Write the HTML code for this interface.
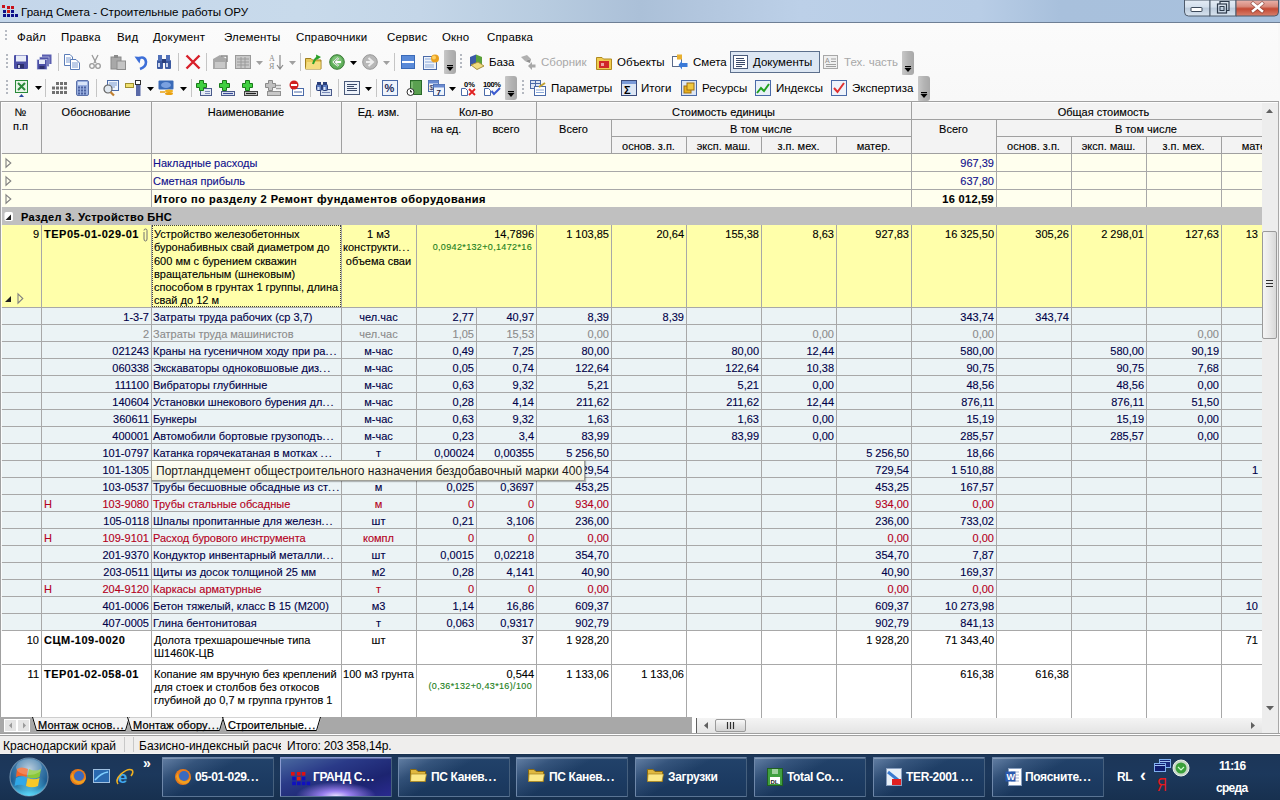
<!DOCTYPE html><html><head><meta charset="utf-8"><style>
html,body{margin:0;padding:0;width:1280px;height:800px;overflow:hidden;background:#fff;font-family:'Liberation Sans', sans-serif;}
.t{position:absolute;white-space:nowrap;font-family:'Liberation Sans', sans-serif;}
.tb .t{-webkit-text-stroke:0.12px currentColor;}
.r{position:absolute;}
svg{position:absolute;overflow:visible}
</style></head><body>
<div class="r" style="left:0px;top:0px;width:1280px;height:22px;background:linear-gradient(90deg,#c4d6ea 0px,#c8daeb 300px,#c4d6e8 420px,#b8cce0 540px,#abc0d8 640px,#b2c6de 700px,#bcd0e8 800px,#b8cde6 980px,#a8c0dc 1060px,#a8c1dd 1280px);"></div>
<div class="r" style="left:0px;top:22px;width:1280px;height:1px;background:#6e7f95;"></div>
<svg style="left:0;top:0" width="20" height="20"><rect x="2" y="5" width="3" height="3" fill="#c8101a"/><rect x="7" y="6" width="3" height="3" fill="#c8101a"/><rect x="11" y="6" width="3" height="3" fill="#c8101a"/><rect x="3" y="10" width="3" height="3" fill="#10108a"/><rect x="7" y="10" width="3" height="3" fill="#d02010"/><rect x="11" y="10" width="3" height="3" fill="#10108a"/><rect x="3" y="14" width="3" height="3" fill="#10108a"/><rect x="7" y="14" width="3" height="3" fill="#10108a"/><rect x="11" y="14" width="3" height="3" fill="#10108a"/><rect x="15" y="14" width="3" height="3" fill="#10108a"/></svg>
<div class="t" style="top:4px;font-size:11.6px;line-height:16px;color:#000;left:21px;">Гранд Смета - Строительные работы ОРУ</div>
<svg style="left:1184px;top:0" width="96" height="18">
<defs><linearGradient id="gb" x1="0" y1="0" x2="0" y2="1"><stop offset="0" stop-color="#e4ecf5"/><stop offset="0.45" stop-color="#d3dfec"/><stop offset="0.5" stop-color="#bccbdc"/><stop offset="1" stop-color="#d8e3ef"/></linearGradient>
<linearGradient id="gr" x1="0" y1="0" x2="0" y2="1"><stop offset="0" stop-color="#eab4ac"/><stop offset="0.4" stop-color="#d88a7c"/><stop offset="0.55" stop-color="#c44a34"/><stop offset="1" stop-color="#d8806c"/></linearGradient></defs>
<path d="M0.5,0 V12 Q0.5,16 4.5,16 H26 V0 Z" fill="url(#gb)" stroke="#4d5a6b" stroke-width="1"/>
<rect x="26" y="0" width="26" height="16" fill="url(#gb)" stroke="#4d5a6b" stroke-width="1"/>
<path d="M52,0 V16 H90.5 Q94.5,16 94.5,12 V0 Z" fill="url(#gr)" stroke="#4d5a6b" stroke-width="1"/>
<rect x="7" y="7.5" width="11" height="4" fill="#fff" stroke="#3d4a5b" stroke-width="1" rx="0.5"/>
<rect x="33.5" y="4" width="9" height="9" fill="none" stroke="#2d3a4b" stroke-width="1.2"/>
<path d="M36,4 V1.5 H45 V10.5 H42.5" fill="none" stroke="#2d3a4b" stroke-width="1.2"/>
<rect x="36" y="6.5" width="4" height="4" fill="none" stroke="#2d3a4b" stroke-width="1"/>
<path d="M69,3.5 L78,11 M78,3.5 L69,11" stroke="#6a2a20" stroke-width="4" stroke-linecap="square" opacity="0.55"/>
<path d="M69,3.5 L78,11 M78,3.5 L69,11" stroke="#fff" stroke-width="2.6" stroke-linecap="square"/>
</svg>
<div class="r" style="left:0px;top:23px;width:1280px;height:78px;background:linear-gradient(180deg,#fbfbfb 0%,#f8f8f8 100%);"></div>
<div class="r" style="left:5px;top:30px;width:2px;height:2px;background:#b8bcc4;"></div>
<div class="r" style="left:5px;top:34px;width:2px;height:2px;background:#b8bcc4;"></div>
<div class="r" style="left:5px;top:38px;width:2px;height:2px;background:#b8bcc4;"></div>
<div class="t" style="top:31px;font-size:11.5px;line-height:13px;color:#000;letter-spacing:0.15px;left:17px;">Файл</div>
<div class="t" style="top:31px;font-size:11.5px;line-height:13px;color:#000;letter-spacing:0.15px;left:61px;">Правка</div>
<div class="t" style="top:31px;font-size:11.5px;line-height:13px;color:#000;letter-spacing:0.15px;left:117px;">Вид</div>
<div class="t" style="top:31px;font-size:11.5px;line-height:13px;color:#000;letter-spacing:0.15px;left:153px;">Документ</div>
<div class="t" style="top:31px;font-size:11.5px;line-height:13px;color:#000;letter-spacing:0.15px;left:224px;">Элементы</div>
<div class="t" style="top:31px;font-size:11.5px;line-height:13px;color:#000;letter-spacing:0.15px;left:296px;">Справочники</div>
<div class="t" style="top:31px;font-size:11.5px;line-height:13px;color:#000;letter-spacing:0.15px;left:387px;">Сервис</div>
<div class="t" style="top:31px;font-size:11.5px;line-height:13px;color:#000;letter-spacing:0.15px;left:442px;">Окно</div>
<div class="t" style="top:31px;font-size:11.5px;line-height:13px;color:#000;letter-spacing:0.15px;left:487px;">Справка</div>
<div class="r" style="left:6px;top:54px;width:2px;height:2px;background:#b4b8c0;"></div>
<div class="r" style="left:6px;top:58px;width:2px;height:2px;background:#b4b8c0;"></div>
<div class="r" style="left:6px;top:62px;width:2px;height:2px;background:#b4b8c0;"></div>
<div class="r" style="left:6px;top:66px;width:2px;height:2px;background:#b4b8c0;"></div>
<div class="r" style="left:6px;top:80px;width:2px;height:2px;background:#b4b8c0;"></div>
<div class="r" style="left:6px;top:84px;width:2px;height:2px;background:#b4b8c0;"></div>
<div class="r" style="left:6px;top:88px;width:2px;height:2px;background:#b4b8c0;"></div>
<div class="r" style="left:6px;top:92px;width:2px;height:2px;background:#b4b8c0;"></div>
<svg style="left:13px;top:54px" width="16" height="16" viewBox="0 0 16 16"><rect x="1" y="1" width="14" height="14" rx="1" fill="#4b4fa6"/><rect x="3" y="1.5" width="10" height="6" fill="#e8ecf8"/><rect x="4" y="10" width="7" height="4.5" fill="#2c2f6e"/><rect x="5" y="11" width="2" height="3" fill="#c0c4e0"/></svg>
<svg style="left:36px;top:54px" width="16" height="16" viewBox="0 0 16 16"><rect x="6" y="0.5" width="9.5" height="9.5" fill="#5a5eb0"/><rect x="3.5" y="3" width="9.5" height="9.5" fill="#4f53a8" stroke="#d8dcf0" stroke-width="0.6"/><rect x="1" y="5.5" width="10" height="10" fill="#4b4fa6" stroke="#d8dcf0" stroke-width="0.6"/><rect x="3" y="6" width="6" height="4" fill="#e8ecf8"/><rect x="3.5" y="12" width="5" height="3" fill="#2c2f6e"/></svg>
<div class="r" style="left:58px;top:53px;width:1px;height:18px;background:#c5c5c5;"></div>
<svg style="left:64px;top:54px" width="16" height="16" viewBox="0 0 16 16"><path d="M0.5,0.5 H6 L8.5,3 V11.5 H0.5 Z" fill="#fff" stroke="#5b7db8"/><path d="M2,4h5M2,6h5M2,8h5" stroke="#7a9ad0"/><path d="M6.5,5.5 H12 L15.5,9 V15.5 H6.5 Z" fill="#fff" stroke="#5b7db8"/><path d="M8,9h6M8,11h6M8,13h6" stroke="#7a9ad0"/></svg>
<svg style="left:89px;top:54px" width="12" height="16" viewBox="0 0 12 16"><path d="M3,1 L7,9 M9,1 L5,9" stroke="#9a9a9a" stroke-width="1.3"/><circle cx="3" cy="12" r="2.3" fill="none" stroke="#9a9a9a" stroke-width="1.3"/><circle cx="9" cy="12" r="2.3" fill="none" stroke="#9a9a9a" stroke-width="1.3"/></svg>
<svg style="left:110px;top:54px" width="16" height="16" viewBox="0 0 16 16"><rect x="1" y="3" width="10" height="12" fill="#a8a8a8" stroke="#8a8a8a"/><rect x="4" y="1" width="4" height="3" fill="#8a8a8a"/><rect x="7" y="7" width="8.5" height="8.5" fill="#c4c4c4" stroke="#8e8e8e"/></svg>
<svg style="left:134px;top:54px" width="14" height="16" viewBox="0 0 14 16"><path d="M3,5 Q11,1 12,8 Q12,13 6,15" fill="none" stroke="#3d6fd8" stroke-width="2.6"/><path d="M0.5,2.5 L5.5,9.5 L7,3 Z" fill="#3d6fd8"/></svg>
<svg style="left:156px;top:54px" width="16" height="16" viewBox="0 0 16 16"><rect x="1" y="6" width="6" height="9" rx="1" fill="#3c5aa0"/><rect x="9" y="6" width="6" height="9" rx="1" fill="#3c5aa0"/><rect x="2" y="1" width="4" height="6" fill="#5070b8"/><rect x="10" y="1" width="4" height="6" fill="#5070b8"/><rect x="6" y="5" width="4" height="4" fill="#2a3f7a"/><rect x="2" y="9" width="2" height="4" fill="#c8d4ee"/><rect x="10" y="9" width="2" height="4" fill="#c8d4ee"/></svg>
<div class="r" style="left:178px;top:53px;width:1px;height:18px;background:#c5c5c5;"></div>
<svg style="left:185px;top:54px" width="16" height="16" viewBox="0 0 16 16"><path d="M1.5,1.5 L14.5,14.5 M14.5,1.5 L1.5,14.5" stroke="#d8202a" stroke-width="2.4"/></svg>
<div class="r" style="left:206px;top:53px;width:1px;height:18px;background:#c5c5c5;"></div>
<svg style="left:212px;top:54px" width="16" height="16" viewBox="0 0 16 16"><path d="M1,5 L8,1 L15,5 V15 H1 Z" fill="#a8a8a8"/><rect x="3" y="8" width="10" height="6" fill="#c8c8c8"/><path d="M9,2 L15,2 L15,8" fill="none" stroke="#8a8a8a" stroke-width="1.5"/></svg>
<svg style="left:235px;top:54px" width="16" height="16" viewBox="0 0 16 16"><rect x="0.5" y="1.5" width="15" height="13" fill="#c8c8c8" stroke="#9a9a9a"/><path d="M2,5h12M2,8h12M2,11h12M6,3v11M10,3v11" stroke="#9a9a9a"/></svg>
<svg style="left:256px;top:61px" width="7" height="4" viewBox="0 0 7 4"><path d="M0,0 H7 L3.5,4 Z" fill="#a0a0a0"/></svg>
<svg style="left:269px;top:54px" width="16" height="16" viewBox="0 0 16 16"><text x="0" y="7" font-size="8" font-family="Liberation Serif" fill="#8a8a8a">A</text><text x="0" y="15" font-size="8" font-family="Liberation Serif" fill="#8a8a8a">Я</text><path d="M11,1 V14 M8,11 L11,15 L14,11" stroke="#8a8a8a" fill="none" stroke-width="1.2"/></svg>
<svg style="left:289px;top:61px" width="7" height="4" viewBox="0 0 7 4"><path d="M0,0 H7 L3.5,4 Z" fill="#a0a0a0"/></svg>
<div class="r" style="left:300px;top:53px;width:1px;height:18px;background:#c5c5c5;"></div>
<svg style="left:305px;top:54px" width="17" height="16" viewBox="0 0 17 16"><path d="M0.5,4.5 H6 L7.5,6 H16 V15 H0.5 Z" fill="#e8c85a" stroke="#a08020"/><path d="M2,8 H15.5 V15 H0.5 Z" fill="#f4dc80"/><path d="M8,10 Q10,4 13,3" stroke="#2aa02a" stroke-width="2" fill="none"/><path d="M11,0.5 L16,3 L11.5,6 Z" fill="#2aa02a"/></svg>
<svg style="left:329px;top:54px" width="16" height="16" viewBox="0 0 16 16"><circle cx="8" cy="8" r="7.3" fill="#5fae5a" stroke="#3a7a36"/><circle cx="8" cy="7" r="5" fill="#8fd088" opacity="0.6"/><path d="M9.5,4 L5,8 L9.5,12 M5,8 H12" stroke="#fff" stroke-width="2" fill="none"/><path d="M9.5,4 L5,8 L9.5,12" stroke="#2a5a26" stroke-width="0.6" fill="none"/></svg>
<svg style="left:350px;top:61px" width="7" height="4" viewBox="0 0 7 4"><path d="M0,0 H7 L3.5,4 Z" fill="#000"/></svg>
<svg style="left:362px;top:54px" width="16" height="16" viewBox="0 0 16 16"><circle cx="8" cy="8" r="7.3" fill="#b8b8b8" stroke="#989898"/><path d="M6.5,4 L11,8 L6.5,12 M4,8 H11" stroke="#eee" stroke-width="2" fill="none"/></svg>
<svg style="left:383px;top:61px" width="7" height="4" viewBox="0 0 7 4"><path d="M0,0 H7 L3.5,4 Z" fill="#a0a0a0"/></svg>
<div class="r" style="left:394px;top:53px;width:1px;height:18px;background:#c5c5c5;"></div>
<svg style="left:401px;top:54px" width="14" height="16" viewBox="0 0 14 16"><rect x="0.5" y="1.5" width="13" height="13" fill="#fff" stroke="#3a6ab8"/><rect x="1" y="2" width="12" height="5" fill="#5a8ad8"/><rect x="1" y="9" width="12" height="5" fill="#5a8ad8"/></svg>
<svg style="left:423px;top:54px" width="17" height="16" viewBox="0 0 17 16"><rect x="0.5" y="2.5" width="13" height="13" fill="#eef3fb" stroke="#4a6aa8"/><path d="M2,5h6M2,8h9M2,11h9M2,13h9" stroke="#8aa8d8"/><circle cx="12" cy="4.5" r="4" fill="#e8a020"/><circle cx="11" cy="3.5" r="2" fill="#ffd060"/></svg>
<svg style="left:444px;top:50px" width="12" height="24" viewBox="0 0 12 24"><defs><linearGradient id="ec444" x1="0" x2="1"><stop offset="0" stop-color="#c8c8c8"/><stop offset="0.5" stop-color="#b4b4b4"/><stop offset="1" stop-color="#a8a8a8"/></linearGradient></defs><path d="M0,1 Q0,0 1,0 H9 Q12,0 12,3 V21 Q12,24 9,24 H1 Q0,24 0,23 Z" fill="url(#ec444)"/><rect x="3" y="15" width="6" height="1.2" fill="#000"/><path d="M2.5,17 H9.5 L6,21 Z" fill="#000"/></svg>
<div class="r" style="left:460px;top:54px;width:2px;height:2px;background:#b4b8c0;"></div>
<div class="r" style="left:460px;top:58px;width:2px;height:2px;background:#b4b8c0;"></div>
<div class="r" style="left:460px;top:62px;width:2px;height:2px;background:#b4b8c0;"></div>
<div class="r" style="left:460px;top:66px;width:2px;height:2px;background:#b4b8c0;"></div>
<svg style="left:469px;top:54px" width="16" height="16" viewBox="0 0 16 16"><path d="M1,3 L7,0.5 L7,10 L1,12.5 Z" fill="#3a5aa8"/><path d="M7,0.5 L13,3 L13,10 L7,10 Z" fill="#5aa03a"/><path d="M2,11 L9,8 L15,12 L8,15.5 Z" fill="#f0dc80" stroke="#a89040"/></svg>
<div class="t" style="top:56px;font-size:11.5px;line-height:13px;color:#000;left:489px;">База</div>
<svg style="left:520px;top:54px" width="16" height="16" viewBox="0 0 16 16"><path d="M1,3 L7,1 L11,5 L5,7 Z" fill="#b0b0b0"/><path d="M5,7 L11,5 L10,9 Z" fill="#909090"/><path d="M8,12 L12,8 L12,10.5 H15.5 V13.5 H12 V16 Z" fill="#a8a8a8"/></svg>
<div class="t" style="top:56px;font-size:11.5px;line-height:13px;color:#a8a8a8;left:541px;">Сборник</div>
<svg style="left:596px;top:54px" width="16" height="16" viewBox="0 0 16 16"><path d="M0.5,3.5 H6 L7.5,5 H15.5 V15.5 H0.5 Z" fill="#f0cc50" stroke="#b08a20"/><rect x="3" y="7" width="10" height="7" fill="#d02828"/><rect x="5" y="9" width="3" height="3" fill="#f0a0a0"/></svg>
<div class="t" style="top:56px;font-size:11.5px;line-height:13px;color:#000;left:617px;">Объекты</div>
<svg style="left:672px;top:54px" width="16" height="16" viewBox="0 0 16 16"><rect x="0.5" y="2.5" width="9" height="10" fill="#fff" stroke="#5a6a8a"/><rect x="5" y="0.5" width="5" height="5" fill="#e8b030"/><path d="M15.5,9 L10,9 L10,6.5 L6.5,11 L10,15.5 L10,13 L15.5,13 Z" fill="#3a7ad8"/></svg>
<div class="t" style="top:56px;font-size:11.5px;line-height:13px;color:#000;left:693px;">Смета</div>
<div class="r" style="left:730px;top:51px;width:90px;height:22px;background:#dde7f3;box-sizing:border-box;border:1px solid #5c6f8c;"></div>
<svg style="left:733px;top:54px" width="15" height="16" viewBox="0 0 15 16"><rect x="0.5" y="1.5" width="14" height="13" fill="#fff" stroke="#4a5a7a"/><path d="M3,4.5h8M3,6.5h9M3,8.5h9M3,10.5h9M3,12.5h6" stroke="#3a4a6a"/></svg>
<div class="t" style="top:56px;font-size:11.5px;line-height:13px;color:#000;left:753px;">Документы</div>
<svg style="left:823px;top:54px" width="15" height="16" viewBox="0 0 15 16"><rect x="0.5" y="1.5" width="14" height="13" fill="#f0f0f0" stroke="#a8a8a8"/><text x="2" y="9" font-size="7" font-family="Liberation Sans" fill="#909090">A</text><path d="M8,5h5M8,7.5h5M3,10.5h10M3,12.5h10" stroke="#a0a0a0"/></svg>
<div class="t" style="top:56px;font-size:11.5px;line-height:13px;color:#a8a8a8;left:844px;">Тех. часть</div>
<svg style="left:902px;top:51px" width="12" height="24" viewBox="0 0 12 24"><defs><linearGradient id="ec902" x1="0" x2="1"><stop offset="0" stop-color="#c8c8c8"/><stop offset="0.5" stop-color="#b4b4b4"/><stop offset="1" stop-color="#a8a8a8"/></linearGradient></defs><path d="M0,1 Q0,0 1,0 H9 Q12,0 12,3 V21 Q12,24 9,24 H1 Q0,24 0,23 Z" fill="url(#ec902)"/><rect x="3" y="15" width="6" height="1.2" fill="#000"/><path d="M2.5,17 H9.5 L6,21 Z" fill="#000"/></svg>
<svg style="left:15px;top:80px" width="14" height="18" viewBox="0 0 14 18"><rect x="0.5" y="0.5" width="12" height="12" fill="#e8f4e8" stroke="#2a8a3a"/><path d="M3,3 L10,10 M10,3 L3,10" stroke="#2a8a3a" stroke-width="2"/><path d="M4,17 L6.5,14 L9,17 Z" fill="#2a4a9a"/></svg>
<svg style="left:35px;top:86px" width="7" height="4" viewBox="0 0 7 4"><path d="M0,0 H7 L3.5,4 Z" fill="#000"/></svg>
<div class="r" style="left:45px;top:79px;width:1px;height:18px;background:#c5c5c5;"></div>
<svg style="left:51px;top:80px" width="17" height="16" viewBox="0 0 17 16"><rect x="5" y="2.0" width="3" height="3" fill="#707070"/><rect x="9" y="2.0" width="3" height="3" fill="#707070"/><rect x="13" y="2.0" width="3" height="3" fill="#707070"/><rect x="1" y="6.5" width="3" height="3" fill="#707070"/><rect x="5" y="6.5" width="3" height="3" fill="#707070"/><rect x="9" y="6.5" width="3" height="3" fill="#707070"/><rect x="13" y="6.5" width="3" height="3" fill="#707070"/><rect x="1" y="11.0" width="3" height="3" fill="#707070"/><rect x="5" y="11.0" width="3" height="3" fill="#707070"/><rect x="9" y="11.0" width="3" height="3" fill="#707070"/><rect x="13" y="11.0" width="3" height="3" fill="#707070"/></svg>
<svg style="left:76px;top:80px" width="13" height="16" viewBox="0 0 13 16"><rect x="0.5" y="0.5" width="12" height="15" rx="1.5" fill="#9ab0e0" stroke="#5a70a8"/><rect x="2" y="2" width="9" height="3" fill="#d8e4f8"/><rect x="2" y="6.5" width="2" height="2" fill="#4a60a0"/><rect x="5" y="6.5" width="2" height="2" fill="#4a60a0"/><rect x="8" y="6.5" width="2" height="2" fill="#4a60a0"/><rect x="2" y="9.5" width="2" height="2" fill="#4a60a0"/><rect x="5" y="9.5" width="2" height="2" fill="#4a60a0"/><rect x="8" y="9.5" width="2" height="2" fill="#4a60a0"/><rect x="2" y="12.5" width="2" height="2" fill="#4a60a0"/><rect x="5" y="12.5" width="2" height="2" fill="#4a60a0"/><rect x="8" y="12.5" width="2" height="2" fill="#4a60a0"/></svg>
<div class="r" style="left:96px;top:79px;width:1px;height:18px;background:#c5c5c5;"></div>
<svg style="left:102px;top:80px" width="17" height="16" viewBox="0 0 17 16"><rect x="5.5" y="0.5" width="11" height="10" fill="#eef3fb" stroke="#4a6aa8"/><path d="M7,3h8M7,5h8M7,7h6" stroke="#7a9ad0"/><circle cx="6" cy="9" r="4" fill="#e0e8f0" stroke="#606060" stroke-width="1.2"/><path d="M8.5,12 L12,15.5" stroke="#c08030" stroke-width="2.2"/></svg>
<svg style="left:125px;top:80px" width="17" height="16" viewBox="0 0 17 16"><rect x="0.5" y="3.5" width="8" height="4" fill="#f0e070" stroke="#a09030"/><rect x="10.5" y="0.5" width="5" height="4" fill="#fff" stroke="#303030"/><rect x="11" y="5" width="4.5" height="11" fill="#5a6aa8"/></svg>
<svg style="left:147px;top:87px" width="7" height="4" viewBox="0 0 7 4"><path d="M0,0 H7 L3.5,4 Z" fill="#000"/></svg>
<svg style="left:158px;top:80px" width="16" height="16" viewBox="0 0 16 16"><rect x="0.5" y="0.5" width="15" height="9" rx="1" fill="#3a6ab8"/><ellipse cx="8" cy="5" rx="5" ry="3" fill="#7aa0e0"/><ellipse cx="11" cy="11" rx="4" ry="1.5" fill="#f0b020"/><ellipse cx="11" cy="13.5" rx="4" ry="1.5" fill="#e8a010"/><path d="M2,12h5" stroke="#e8a010" stroke-width="1.5"/></svg>
<svg style="left:180px;top:87px" width="7" height="4" viewBox="0 0 7 4"><path d="M0,0 H7 L3.5,4 Z" fill="#000"/></svg>
<div class="r" style="left:191px;top:79px;width:1px;height:18px;background:#c5c5c5;"></div>
<svg style="left:196px;top:80px" width="16" height="16" viewBox="0 0 16 16"><rect x="4.5" y="8.5" width="11" height="7" fill="#e4eaf4" stroke="#4a5a8a"/><path d="M9,11.5h5M9,13.5h5" stroke="#7a8ab8"/><path d="M3.5,0.5 H7.5 V3.5 H10.5 V7.5 H7.5 V10.5 H3.5 V7.5 H0.5 V3.5 H3.5 Z" fill="#40d040" stroke="#1a7a1a"/></svg>
<svg style="left:219px;top:80px" width="16" height="16" viewBox="0 0 16 16"><rect x="2.5" y="11.5" width="13" height="4" fill="#e4eaf4" stroke="#4a5a8a"/><path d="M4,13.5h10" stroke="#3a4a9a" stroke-width="1.2"/><path d="M3.5,0.5 H7.5 V3.5 H10.5 V7.5 H7.5 V10.5 H3.5 V7.5 H0.5 V3.5 H3.5 Z" fill="#40d040" stroke="#1a7a1a"/></svg>
<svg style="left:242px;top:80px" width="16" height="16" viewBox="0 0 16 16"><rect x="2.5" y="11.5" width="13" height="4" fill="#c8c8c8" stroke="#404040"/><path d="M4,13.5h10" stroke="#202020" stroke-width="1.2"/><path d="M3.5,0.5 H7.5 V3.5 H10.5 V7.5 H7.5 V10.5 H3.5 V7.5 H0.5 V3.5 H3.5 Z" fill="#40d040" stroke="#1a7a1a"/></svg>
<svg style="left:265px;top:80px" width="16" height="16" viewBox="0 0 16 16"><rect x="2.5" y="11.5" width="13" height="4" fill="#c8c8c8" stroke="#909090"/><path d="M11,5.5h5M11,8.5h5" stroke="#a0a0a0" stroke-width="1.5"/><path d="M3.5,0.5 H7.5 V3.5 H10.5 V7.5 H7.5 V10.5 H3.5 V7.5 H0.5 V3.5 H3.5 Z" fill="#c0c0c0" stroke="#8a8a8a"/></svg>
<svg style="left:289px;top:80px" width="15" height="16" viewBox="0 0 15 16"><rect x="3.5" y="8.5" width="11" height="7" fill="#fff" stroke="#4a6aa8"/><path d="M5,12h8" stroke="#4a6aa8"/><circle cx="5" cy="5" r="4.5" fill="#d02020"/><rect x="2" y="4" width="6" height="2" fill="#fff"/></svg>
<div class="r" style="left:310px;top:79px;width:1px;height:18px;background:#c5c5c5;"></div>
<svg style="left:316px;top:80px" width="16" height="16" viewBox="0 0 16 16"><rect x="4.5" y="9.5" width="11" height="6" fill="#dde6f4" stroke="#4a5a8a"/><path d="M6,12.5h8" stroke="#7a8ab8"/><rect x="1" y="2" width="4" height="3" fill="#2a3f7a"/><rect x="7" y="2" width="4" height="3" fill="#2a3f7a"/><rect x="0.5" y="4.5" width="5" height="6" rx="1" fill="#5a7ac0" stroke="#2a3f7a"/><rect x="6.5" y="4.5" width="5" height="6" rx="1" fill="#5a7ac0" stroke="#2a3f7a"/><rect x="5" y="5" width="2" height="3" fill="#2a3f7a"/><rect x="1.5" y="7" width="2" height="3" fill="#d8e4f8"/><rect x="7.5" y="7" width="2" height="3" fill="#d8e4f8"/></svg>
<div class="r" style="left:338px;top:79px;width:1px;height:18px;background:#c5c5c5;"></div>
<svg style="left:344px;top:80px" width="16" height="16" viewBox="0 0 16 16"><rect x="0.5" y="1.5" width="15" height="13" fill="#eef3fb" stroke="#4a5a7a"/><path d="M3,4.5h10M3,6.5h7M3,8.5h10M3,10.5h10" stroke="#3a4a6a"/></svg>
<svg style="left:365px;top:87px" width="7" height="4" viewBox="0 0 7 4"><path d="M0,0 H7 L3.5,4 Z" fill="#000"/></svg>
<div class="r" style="left:376px;top:79px;width:1px;height:18px;background:#c5c5c5;"></div>
<svg style="left:382px;top:80px" width="16" height="16" viewBox="0 0 16 16"><rect x="0.5" y="0.5" width="15" height="15" fill="#eef3fb" stroke="#4a6aa8"/><text x="2.5" y="12" font-size="11" font-family="Liberation Sans" font-weight="bold" fill="#1a2a5a">%</text></svg>
<svg style="left:406px;top:80px" width="16" height="16" viewBox="0 0 16 16"><rect x="4.5" y="0.5" width="11" height="14" fill="#5aa050" stroke="#2a6a2a"/><path d="M6,2 V14" stroke="#9ad090"/><circle cx="4.5" cy="12" r="3.5" fill="#fff" stroke="#303030"/><path d="M4.5,10v2h1.5" stroke="#303030"/></svg>
<svg style="left:428px;top:80px" width="17" height="16" viewBox="0 0 17 16"><rect x="0.5" y="0.5" width="10" height="11" fill="#eef3fb" stroke="#4a6aa8"/><rect x="0.5" y="0.5" width="10" height="3" fill="#6a8ad0"/><rect x="5.5" y="4.5" width="11" height="11" fill="#eef3fb" stroke="#4a6aa8"/><rect x="5.5" y="4.5" width="11" height="3" fill="#6a8ad0"/><text x="8.5" y="15" font-size="8" font-weight="bold" font-family="Liberation Sans" fill="#1a1a3a">7</text><text x="1.5" y="10" font-size="7" font-family="Liberation Sans" fill="#1a1a3a">$</text></svg>
<svg style="left:449px;top:87px" width="7" height="4" viewBox="0 0 7 4"><path d="M0,0 H7 L3.5,4 Z" fill="#000"/></svg>
<svg style="left:461px;top:80px" width="17" height="16" viewBox="0 0 17 16"><text x="3" y="6.5" font-size="7.5" font-weight="bold" font-family="Liberation Sans" fill="#000">0%</text><path d="M0.5,8.5 H4.5 L6.5,10.5 V15.5 H0.5 Z" fill="#fff" stroke="#4a6aa8"/><path d="M8,9 L14,15 M14,9 L8,15" stroke="#e02020" stroke-width="1.8"/></svg>
<svg style="left:484px;top:80px" width="17" height="16" viewBox="0 0 17 16"><text x="-1" y="6.5" font-size="7.5" font-weight="bold" font-family="Liberation Sans" fill="#000" textLength="18">100%</text><path d="M0.5,8.5 H4.5 L6.5,10.5 V15.5 H0.5 Z" fill="#fff" stroke="#4a6aa8"/><path d="M7.5,11 L10,14 L16,8" stroke="#3a5ad0" stroke-width="2" fill="none"/></svg>
<svg style="left:505px;top:76px" width="12" height="24" viewBox="0 0 12 24"><defs><linearGradient id="ec505" x1="0" x2="1"><stop offset="0" stop-color="#c8c8c8"/><stop offset="0.5" stop-color="#b4b4b4"/><stop offset="1" stop-color="#a8a8a8"/></linearGradient></defs><path d="M0,1 Q0,0 1,0 H9 Q12,0 12,3 V21 Q12,24 9,24 H1 Q0,24 0,23 Z" fill="url(#ec505)"/><rect x="3" y="15" width="6" height="1.2" fill="#000"/><path d="M2.5,17 H9.5 L6,21 Z" fill="#000"/></svg>
<div class="r" style="left:522px;top:80px;width:2px;height:2px;background:#b4b8c0;"></div>
<div class="r" style="left:522px;top:84px;width:2px;height:2px;background:#b4b8c0;"></div>
<div class="r" style="left:522px;top:88px;width:2px;height:2px;background:#b4b8c0;"></div>
<div class="r" style="left:522px;top:92px;width:2px;height:2px;background:#b4b8c0;"></div>
<svg style="left:530px;top:80px" width="17" height="17" viewBox="0 0 17 17"><rect x="0.5" y="0.5" width="10" height="8" fill="#dde6f4" stroke="#4a6aa8"/><path d="M0.5,3.5h10M5.5,0.5v8" stroke="#4a6aa8"/><rect x="4.5" y="6.5" width="11" height="9" fill="#fff" stroke="#4a6aa8"/><path d="M6,10h8M6,12.5h8" stroke="#8aa8d8"/><path d="M9,7 L15,3" stroke="#c0a030" stroke-width="2"/></svg>
<div class="t" style="top:82px;font-size:11.5px;line-height:13px;color:#000;left:551px;">Параметры</div>
<svg style="left:621px;top:80px" width="16" height="16" viewBox="0 0 16 16"><rect x="0.5" y="0.5" width="15" height="15" fill="#dde6f4" stroke="#3a4a7a"/><rect x="1" y="1" width="14" height="3" fill="#7a9ad8"/><text x="3" y="14" font-size="11" font-weight="bold" font-family="Liberation Sans" fill="#000">Σ</text></svg>
<div class="t" style="top:82px;font-size:11.5px;line-height:13px;color:#000;left:641px;">Итоги</div>
<svg style="left:681px;top:80px" width="16" height="16" viewBox="0 0 16 16"><rect x="0.5" y="0.5" width="15" height="15" fill="#dde6f4" stroke="#4a6aa8"/><rect x="3" y="6" width="7" height="7" fill="#e8b020" stroke="#a07010"/><rect x="6" y="3" width="7" height="7" fill="#f0c840" stroke="#a07010"/></svg>
<div class="t" style="top:82px;font-size:11.5px;line-height:13px;color:#000;left:702px;">Ресурсы</div>
<svg style="left:755px;top:80px" width="16" height="16" viewBox="0 0 16 16"><rect x="0.5" y="0.5" width="15" height="15" fill="#e8f0f8" stroke="#4a6aa8"/><path d="M2,13 L6,8 L9,11 L14,4" stroke="#20a020" stroke-width="2" fill="none"/></svg>
<div class="t" style="top:82px;font-size:11.5px;line-height:13px;color:#000;left:776px;">Индексы</div>
<svg style="left:831px;top:80px" width="16" height="16" viewBox="0 0 16 16"><rect x="0.5" y="0.5" width="15" height="15" fill="#eef3fb" stroke="#4a6aa8"/><path d="M3,8 L6.5,12 L13,3" stroke="#e03030" stroke-width="2" fill="none"/></svg>
<div class="t" style="top:82px;font-size:11.5px;line-height:13px;color:#000;left:852px;">Экспертиза</div>
<svg style="left:918px;top:76px" width="12" height="25" viewBox="0 0 12 25"><defs><linearGradient id="ec918" x1="0" x2="1"><stop offset="0" stop-color="#c8c8c8"/><stop offset="0.5" stop-color="#b4b4b4"/><stop offset="1" stop-color="#a8a8a8"/></linearGradient></defs><path d="M0,1 Q0,0 1,0 H9 Q12,0 12,3 V22 Q12,25 9,25 H1 Q0,25 0,24 Z" fill="url(#ec918)"/><rect x="3" y="16" width="6" height="1.2" fill="#000"/><path d="M2.5,18 H9.5 L6,22 Z" fill="#000"/></svg>
<div class="tb" style="position:absolute;left:0;top:0;width:1262px;height:718px;overflow:hidden">
<div class="r" style="left:0px;top:101px;width:1262px;height:52px;background:#f3f3f3;"></div>
<div class="r" style="left:0px;top:101px;width:1262px;height:1px;background:#a0a0a0;"></div>
<div class="r" style="left:0px;top:101px;width:1px;height:617px;background:#a0a0a0;"></div>
<div class="r" style="left:1px;top:102px;width:1261px;height:1px;background:#fdfdfd;"></div>
<div class="r" style="left:41px;top:101px;width:1px;height:52px;background:#a0a0a0;"></div>
<div class="r" style="left:151px;top:101px;width:1px;height:52px;background:#a0a0a0;"></div>
<div class="r" style="left:341px;top:101px;width:1px;height:52px;background:#a0a0a0;"></div>
<div class="r" style="left:416px;top:101px;width:1px;height:52px;background:#a0a0a0;"></div>
<div class="r" style="left:536px;top:101px;width:1px;height:52px;background:#a0a0a0;"></div>
<div class="r" style="left:911px;top:101px;width:1px;height:52px;background:#a0a0a0;"></div>
<div class="r" style="left:476px;top:119px;width:1px;height:34px;background:#a0a0a0;"></div>
<div class="r" style="left:686px;top:136px;width:1px;height:17px;background:#a0a0a0;"></div>
<div class="r" style="left:761px;top:136px;width:1px;height:17px;background:#a0a0a0;"></div>
<div class="r" style="left:836px;top:136px;width:1px;height:17px;background:#a0a0a0;"></div>
<div class="r" style="left:1071px;top:136px;width:1px;height:17px;background:#a0a0a0;"></div>
<div class="r" style="left:1146px;top:136px;width:1px;height:17px;background:#a0a0a0;"></div>
<div class="r" style="left:1221px;top:136px;width:1px;height:17px;background:#a0a0a0;"></div>
<div class="r" style="left:611px;top:119px;width:1px;height:34px;background:#a0a0a0;"></div>
<div class="r" style="left:996px;top:119px;width:1px;height:34px;background:#a0a0a0;"></div>
<div class="r" style="left:416px;top:119px;width:846px;height:1px;background:#a0a0a0;"></div>
<div class="r" style="left:611px;top:136px;width:300px;height:1px;background:#a0a0a0;"></div>
<div class="r" style="left:996px;top:136px;width:266px;height:1px;background:#a0a0a0;"></div>
<div class="r" style="left:0px;top:153px;width:1262px;height:1px;background:#a0a0a0;"></div>
<div class="t" style="top:106px;font-size:11px;line-height:13px;color:#000;left:0px;width:41px;text-align:center;">№</div>
<div class="t" style="top:120px;font-size:11px;line-height:13px;color:#000;left:0px;width:41px;text-align:center;">п.п</div>
<div class="t" style="top:106px;font-size:11px;line-height:13px;color:#000;left:41px;width:110px;text-align:center;">Обоснование</div>
<div class="t" style="top:106px;font-size:11px;line-height:13px;color:#000;left:151px;width:190px;text-align:center;">Наименование</div>
<div class="t" style="top:106px;font-size:11px;line-height:13px;color:#000;left:341px;width:75px;text-align:center;">Ед. изм.</div>
<div class="t" style="top:106px;font-size:11px;line-height:13px;color:#000;left:416px;width:120px;text-align:center;">Кол-во</div>
<div class="t" style="top:123px;font-size:11px;line-height:13px;color:#000;left:416px;width:60px;text-align:center;">на ед.</div>
<div class="t" style="top:123px;font-size:11px;line-height:13px;color:#000;left:476px;width:60px;text-align:center;">всего</div>
<div class="t" style="top:106px;font-size:11px;line-height:13px;color:#000;left:536px;width:375px;text-align:center;">Стоимость единицы</div>
<div class="t" style="top:123px;font-size:11px;line-height:13px;color:#000;left:536px;width:75px;text-align:center;">Всего</div>
<div class="t" style="top:123px;font-size:11px;line-height:13px;color:#000;left:611px;width:300px;text-align:center;">В том числе</div>
<div class="t" style="top:140px;font-size:11px;line-height:13px;color:#000;left:611px;width:75px;text-align:center;">основ. з.п.</div>
<div class="t" style="top:140px;font-size:11px;line-height:13px;color:#000;left:686px;width:75px;text-align:center;">эксп. маш.</div>
<div class="t" style="top:140px;font-size:11px;line-height:13px;color:#000;left:761px;width:75px;text-align:center;">з.п. мех.</div>
<div class="t" style="top:140px;font-size:11px;line-height:13px;color:#000;left:836px;width:75px;text-align:center;">матер.</div>
<div class="t" style="top:106px;font-size:11px;line-height:13px;color:#000;left:911px;width:385px;text-align:center;">Общая стоимость</div>
<div class="t" style="top:123px;font-size:11px;line-height:13px;color:#000;left:911px;width:85px;text-align:center;">Всего</div>
<div class="t" style="top:123px;font-size:11px;line-height:13px;color:#000;left:996px;width:300px;text-align:center;">В том числе</div>
<div class="t" style="top:140px;font-size:11px;line-height:13px;color:#000;left:996px;width:75px;text-align:center;">основ. з.п.</div>
<div class="t" style="top:140px;font-size:11px;line-height:13px;color:#000;left:1071px;width:75px;text-align:center;">эксп. маш.</div>
<div class="t" style="top:140px;font-size:11px;line-height:13px;color:#000;left:1146px;width:75px;text-align:center;">з.п. мех.</div>
<div class="t" style="top:140px;font-size:11px;line-height:13px;color:#000;left:1221px;width:75px;text-align:center;">матер.</div>
<div class="r" style="left:1px;top:154px;width:1261px;height:53px;background:#ffffee;"></div>
<div class="r" style="left:0px;top:171px;width:1262px;height:1px;background:#a8a8a8;"></div>
<div class="r" style="left:0px;top:189px;width:1262px;height:1px;background:#a8a8a8;"></div>
<div class="r" style="left:151px;top:154px;width:1px;height:53px;background:#a8a8a8;"></div>
<div class="r" style="left:911px;top:154px;width:1px;height:53px;background:#a8a8a8;"></div>
<div class="r" style="left:996px;top:154px;width:1px;height:53px;background:#a8a8a8;"></div>
<div class="r" style="left:1071px;top:154px;width:1px;height:53px;background:#a8a8a8;"></div>
<div class="r" style="left:1146px;top:154px;width:1px;height:53px;background:#a8a8a8;"></div>
<div class="r" style="left:1221px;top:154px;width:1px;height:53px;background:#a8a8a8;"></div>
<svg style="left:5px;top:158px" width="7" height="10" viewBox="0 0 7 10"><path d="M1,0.8 L5.8,5 L1,9.2 Z" fill="none" stroke="#808080" stroke-width="1.1"/></svg>
<svg style="left:5px;top:176px" width="7" height="10" viewBox="0 0 7 10"><path d="M1,0.8 L5.8,5 L1,9.2 Z" fill="none" stroke="#808080" stroke-width="1.1"/></svg>
<svg style="left:5px;top:194px" width="7" height="10" viewBox="0 0 7 10"><path d="M1,0.8 L5.8,5 L1,9.2 Z" fill="none" stroke="#808080" stroke-width="1.1"/></svg>
<div class="t" style="top:157px;font-size:11px;line-height:13px;color:#10108c;left:153px;">Накладные расходы</div>
<div class="t" style="top:157px;font-size:11px;line-height:13px;color:#10108c;left:494px;width:500px;text-align:right;">967,39</div>
<div class="t" style="top:175px;font-size:11px;line-height:13px;color:#10108c;left:153px;">Сметная прибыль</div>
<div class="t" style="top:175px;font-size:11px;line-height:13px;color:#10108c;left:494px;width:500px;text-align:right;">637,80</div>
<div class="t" style="top:193px;font-size:11px;line-height:13px;color:#000;font-weight:bold;letter-spacing:0.5px;left:154px;">Итого по разделу 2 Ремонт фундаментов оборудования</div>
<div class="t" style="top:193px;font-size:11px;line-height:13px;color:#000;font-weight:bold;letter-spacing:0.3px;left:494px;width:500px;text-align:right;">16 012,59</div>
<div class="r" style="left:1px;top:207px;width:1261px;height:18px;background:#c0c0c0;"></div>
<svg style="left:4px;top:212px" width="9" height="9" viewBox="0 0 9 9"><rect x="0.5" y="0" width="8.5" height="9" rx="1.8" fill="#fff"/><path d="M1.5,8 H7 V2.5 Z" fill="#202020"/></svg>
<div class="t" style="top:211px;font-size:11px;line-height:13px;color:#000;font-weight:bold;letter-spacing:0.3px;left:21px;">Раздел 3. Устройство БНС</div>
<div class="r" style="left:1px;top:225px;width:1261px;height:82px;background:#ffffaa;"></div>
<div class="r" style="left:41px;top:225px;width:1px;height:82px;background:#a8a8a8;"></div>
<div class="r" style="left:151px;top:225px;width:1px;height:82px;background:#a8a8a8;"></div>
<div class="r" style="left:341px;top:225px;width:1px;height:82px;background:#a8a8a8;"></div>
<div class="r" style="left:416px;top:225px;width:1px;height:82px;background:#a8a8a8;"></div>
<div class="r" style="left:536px;top:225px;width:1px;height:82px;background:#a8a8a8;"></div>
<div class="r" style="left:611px;top:225px;width:1px;height:82px;background:#a8a8a8;"></div>
<div class="r" style="left:686px;top:225px;width:1px;height:82px;background:#a8a8a8;"></div>
<div class="r" style="left:761px;top:225px;width:1px;height:82px;background:#a8a8a8;"></div>
<div class="r" style="left:836px;top:225px;width:1px;height:82px;background:#a8a8a8;"></div>
<div class="r" style="left:911px;top:225px;width:1px;height:82px;background:#a8a8a8;"></div>
<div class="r" style="left:996px;top:225px;width:1px;height:82px;background:#a8a8a8;"></div>
<div class="r" style="left:1071px;top:225px;width:1px;height:82px;background:#a8a8a8;"></div>
<div class="r" style="left:1146px;top:225px;width:1px;height:82px;background:#a8a8a8;"></div>
<div class="r" style="left:1221px;top:225px;width:1px;height:82px;background:#a8a8a8;"></div>
<div class="r" style="left:0px;top:307px;width:1262px;height:1px;background:#a8a8a8;"></div>
<div class="t" style="top:228px;font-size:11px;line-height:13px;color:#000;left:-461px;width:500px;text-align:right;">9</div>
<div class="t" style="top:228px;font-size:11px;line-height:13px;color:#000;font-weight:bold;letter-spacing:0.5px;left:44px;">ТЕР05-01-029-01</div>
<svg style="left:142px;top:228px" width="7" height="14" viewBox="0 0 7 14"><path d="M2,4 V11 Q2,13 3.5,13 Q5,13 5,11 V2.5 Q5,1 3.5,1 Q2,1 2,2.5" fill="none" stroke="#707070" stroke-width="1"/></svg>
<div class="t" style="top:228px;font-size:11px;line-height:13px;color:#000;left:154px;">Устройство железобетонных</div>
<div class="t" style="top:241px;font-size:11px;line-height:13px;color:#000;left:154px;">буронабивных свай диаметром до</div>
<div class="t" style="top:255px;font-size:11px;line-height:13px;color:#000;left:154px;">600 мм с бурением скважин</div>
<div class="t" style="top:268px;font-size:11px;line-height:13px;color:#000;left:154px;">вращательным (шнековым)</div>
<div class="t" style="top:281px;font-size:11px;line-height:13px;color:#000;left:154px;">способом в грунтах 1 группы, длина</div>
<div class="t" style="top:294px;font-size:11px;line-height:13px;color:#000;left:154px;">свай до 12 м</div>
<div class="r" style="left:152px;top:225px;width:189px;height:82px;box-sizing:border-box;border:1px dotted #404040"></div>
<div class="t" style="top:228px;font-size:11px;line-height:13px;color:#000;left:341px;width:75px;text-align:center;">1 м3</div>
<div class="t" style="top:241px;font-size:11px;line-height:13px;color:#000;left:343px;">конструкти<span style="letter-spacing:1px">..</span>.</div>
<div class="t" style="top:255px;font-size:11px;line-height:13px;color:#000;left:341px;width:75px;text-align:center;">объема сваи</div>
<div class="t" style="top:228px;font-size:11px;line-height:13px;color:#000;left:34px;width:500px;text-align:right;">14,7896</div>
<div class="t" style="top:241px;font-size:9px;line-height:12px;color:#1a7e1a;letter-spacing:0.35px;left:32px;width:500px;text-align:right;">0,0942*132+0,1472*16</div>
<div class="t" style="top:228px;font-size:11px;line-height:13px;color:#000;left:109px;width:500px;text-align:right;">1 103,85</div>
<div class="t" style="top:228px;font-size:11px;line-height:13px;color:#000;left:184px;width:500px;text-align:right;">20,64</div>
<div class="t" style="top:228px;font-size:11px;line-height:13px;color:#000;left:259px;width:500px;text-align:right;">155,38</div>
<div class="t" style="top:228px;font-size:11px;line-height:13px;color:#000;left:334px;width:500px;text-align:right;">8,63</div>
<div class="t" style="top:228px;font-size:11px;line-height:13px;color:#000;left:409px;width:500px;text-align:right;">927,83</div>
<div class="t" style="top:228px;font-size:11px;line-height:13px;color:#000;left:494px;width:500px;text-align:right;">16 325,50</div>
<div class="t" style="top:228px;font-size:11px;line-height:13px;color:#000;left:569px;width:500px;text-align:right;">305,26</div>
<div class="t" style="top:228px;font-size:11px;line-height:13px;color:#000;left:644px;width:500px;text-align:right;">2 298,01</div>
<div class="t" style="top:228px;font-size:11px;line-height:13px;color:#000;left:719px;width:500px;text-align:right;">127,63</div>
<div class="t" style="top:228px;font-size:11px;line-height:13px;color:#000;left:758px;width:500px;text-align:right;">13</div>
<svg style="left:4px;top:295px" width="8" height="8" viewBox="0 0 8 8"><path d="M1,7 H7 V1 Z" fill="#202020"/></svg>
<svg style="left:17px;top:293px" width="7" height="11" viewBox="0 0 7 11"><path d="M1,0.8 L5.8,5.5 L1,10.2 Z" fill="none" stroke="#808080" stroke-width="1.1"/></svg>
<div class="r" style="left:1px;top:308px;width:1261px;height:322px;background:#ebf3f5;"></div>
<div class="r" style="left:0px;top:324px;width:1262px;height:1px;background:#a8a8a8;"></div>
<div class="t" style="top:311px;font-size:11px;line-height:13px;color:#000048;left:-351px;width:500px;text-align:right;">1-3-7</div>
<div class="t" style="top:311px;font-size:11px;line-height:13px;color:#000048;left:153px;">Затраты труда рабочих (ср 3,7)</div>
<div class="t" style="top:311px;font-size:11px;line-height:13px;color:#000048;left:341px;width:75px;text-align:center;">чел.час</div>
<div class="t" style="top:311px;font-size:11px;line-height:13px;color:#000048;left:-26px;width:500px;text-align:right;">2,77</div>
<div class="t" style="top:311px;font-size:11px;line-height:13px;color:#000048;left:34px;width:500px;text-align:right;">40,97</div>
<div class="t" style="top:311px;font-size:11px;line-height:13px;color:#000048;left:109px;width:500px;text-align:right;">8,39</div>
<div class="t" style="top:311px;font-size:11px;line-height:13px;color:#000048;left:184px;width:500px;text-align:right;">8,39</div>
<div class="t" style="top:311px;font-size:11px;line-height:13px;color:#000048;left:494px;width:500px;text-align:right;">343,74</div>
<div class="t" style="top:311px;font-size:11px;line-height:13px;color:#000048;left:569px;width:500px;text-align:right;">343,74</div>
<div class="r" style="left:0px;top:341px;width:1262px;height:1px;background:#a8a8a8;"></div>
<div class="t" style="top:328px;font-size:11px;line-height:13px;color:#8c8c8c;left:-351px;width:500px;text-align:right;">2</div>
<div class="t" style="top:328px;font-size:11px;line-height:13px;color:#8c8c8c;left:153px;">Затраты труда машинистов</div>
<div class="t" style="top:328px;font-size:11px;line-height:13px;color:#8c8c8c;left:341px;width:75px;text-align:center;">чел.час</div>
<div class="t" style="top:328px;font-size:11px;line-height:13px;color:#8c8c8c;left:-26px;width:500px;text-align:right;">1,05</div>
<div class="t" style="top:328px;font-size:11px;line-height:13px;color:#8c8c8c;left:34px;width:500px;text-align:right;">15,53</div>
<div class="t" style="top:328px;font-size:11px;line-height:13px;color:#8c8c8c;left:109px;width:500px;text-align:right;">0,00</div>
<div class="t" style="top:328px;font-size:11px;line-height:13px;color:#8c8c8c;left:334px;width:500px;text-align:right;">0,00</div>
<div class="t" style="top:328px;font-size:11px;line-height:13px;color:#8c8c8c;left:494px;width:500px;text-align:right;">0,00</div>
<div class="t" style="top:328px;font-size:11px;line-height:13px;color:#8c8c8c;left:719px;width:500px;text-align:right;">0,00</div>
<div class="r" style="left:0px;top:358px;width:1262px;height:1px;background:#a8a8a8;"></div>
<div class="t" style="top:345px;font-size:11px;line-height:13px;color:#000048;left:-351px;width:500px;text-align:right;">021243</div>
<div class="t" style="top:345px;font-size:11px;line-height:13px;color:#000048;left:153px;">Краны на гусеничном ходу при ра<span style="letter-spacing:1px">..</span>.</div>
<div class="t" style="top:345px;font-size:11px;line-height:13px;color:#000048;left:341px;width:75px;text-align:center;">м-час</div>
<div class="t" style="top:345px;font-size:11px;line-height:13px;color:#000048;left:-26px;width:500px;text-align:right;">0,49</div>
<div class="t" style="top:345px;font-size:11px;line-height:13px;color:#000048;left:34px;width:500px;text-align:right;">7,25</div>
<div class="t" style="top:345px;font-size:11px;line-height:13px;color:#000048;left:109px;width:500px;text-align:right;">80,00</div>
<div class="t" style="top:345px;font-size:11px;line-height:13px;color:#000048;left:259px;width:500px;text-align:right;">80,00</div>
<div class="t" style="top:345px;font-size:11px;line-height:13px;color:#000048;left:334px;width:500px;text-align:right;">12,44</div>
<div class="t" style="top:345px;font-size:11px;line-height:13px;color:#000048;left:494px;width:500px;text-align:right;">580,00</div>
<div class="t" style="top:345px;font-size:11px;line-height:13px;color:#000048;left:644px;width:500px;text-align:right;">580,00</div>
<div class="t" style="top:345px;font-size:11px;line-height:13px;color:#000048;left:719px;width:500px;text-align:right;">90,19</div>
<div class="r" style="left:0px;top:375px;width:1262px;height:1px;background:#a8a8a8;"></div>
<div class="t" style="top:362px;font-size:11px;line-height:13px;color:#000048;left:-351px;width:500px;text-align:right;">060338</div>
<div class="t" style="top:362px;font-size:11px;line-height:13px;color:#000048;left:153px;">Экскаваторы одноковшовые диз<span style="letter-spacing:1px">..</span>.</div>
<div class="t" style="top:362px;font-size:11px;line-height:13px;color:#000048;left:341px;width:75px;text-align:center;">м-час</div>
<div class="t" style="top:362px;font-size:11px;line-height:13px;color:#000048;left:-26px;width:500px;text-align:right;">0,05</div>
<div class="t" style="top:362px;font-size:11px;line-height:13px;color:#000048;left:34px;width:500px;text-align:right;">0,74</div>
<div class="t" style="top:362px;font-size:11px;line-height:13px;color:#000048;left:109px;width:500px;text-align:right;">122,64</div>
<div class="t" style="top:362px;font-size:11px;line-height:13px;color:#000048;left:259px;width:500px;text-align:right;">122,64</div>
<div class="t" style="top:362px;font-size:11px;line-height:13px;color:#000048;left:334px;width:500px;text-align:right;">10,38</div>
<div class="t" style="top:362px;font-size:11px;line-height:13px;color:#000048;left:494px;width:500px;text-align:right;">90,75</div>
<div class="t" style="top:362px;font-size:11px;line-height:13px;color:#000048;left:644px;width:500px;text-align:right;">90,75</div>
<div class="t" style="top:362px;font-size:11px;line-height:13px;color:#000048;left:719px;width:500px;text-align:right;">7,68</div>
<div class="r" style="left:0px;top:392px;width:1262px;height:1px;background:#a8a8a8;"></div>
<div class="t" style="top:379px;font-size:11px;line-height:13px;color:#000048;left:-351px;width:500px;text-align:right;">111100</div>
<div class="t" style="top:379px;font-size:11px;line-height:13px;color:#000048;left:153px;">Вибраторы глубинные</div>
<div class="t" style="top:379px;font-size:11px;line-height:13px;color:#000048;left:341px;width:75px;text-align:center;">м-час</div>
<div class="t" style="top:379px;font-size:11px;line-height:13px;color:#000048;left:-26px;width:500px;text-align:right;">0,63</div>
<div class="t" style="top:379px;font-size:11px;line-height:13px;color:#000048;left:34px;width:500px;text-align:right;">9,32</div>
<div class="t" style="top:379px;font-size:11px;line-height:13px;color:#000048;left:109px;width:500px;text-align:right;">5,21</div>
<div class="t" style="top:379px;font-size:11px;line-height:13px;color:#000048;left:259px;width:500px;text-align:right;">5,21</div>
<div class="t" style="top:379px;font-size:11px;line-height:13px;color:#000048;left:334px;width:500px;text-align:right;">0,00</div>
<div class="t" style="top:379px;font-size:11px;line-height:13px;color:#000048;left:494px;width:500px;text-align:right;">48,56</div>
<div class="t" style="top:379px;font-size:11px;line-height:13px;color:#000048;left:644px;width:500px;text-align:right;">48,56</div>
<div class="t" style="top:379px;font-size:11px;line-height:13px;color:#000048;left:719px;width:500px;text-align:right;">0,00</div>
<div class="r" style="left:0px;top:409px;width:1262px;height:1px;background:#a8a8a8;"></div>
<div class="t" style="top:396px;font-size:11px;line-height:13px;color:#000048;left:-351px;width:500px;text-align:right;">140604</div>
<div class="t" style="top:396px;font-size:11px;line-height:13px;color:#000048;left:153px;">Установки шнекового бурения дл<span style="letter-spacing:1px">..</span>.</div>
<div class="t" style="top:396px;font-size:11px;line-height:13px;color:#000048;left:341px;width:75px;text-align:center;">м-час</div>
<div class="t" style="top:396px;font-size:11px;line-height:13px;color:#000048;left:-26px;width:500px;text-align:right;">0,28</div>
<div class="t" style="top:396px;font-size:11px;line-height:13px;color:#000048;left:34px;width:500px;text-align:right;">4,14</div>
<div class="t" style="top:396px;font-size:11px;line-height:13px;color:#000048;left:109px;width:500px;text-align:right;">211,62</div>
<div class="t" style="top:396px;font-size:11px;line-height:13px;color:#000048;left:259px;width:500px;text-align:right;">211,62</div>
<div class="t" style="top:396px;font-size:11px;line-height:13px;color:#000048;left:334px;width:500px;text-align:right;">12,44</div>
<div class="t" style="top:396px;font-size:11px;line-height:13px;color:#000048;left:494px;width:500px;text-align:right;">876,11</div>
<div class="t" style="top:396px;font-size:11px;line-height:13px;color:#000048;left:644px;width:500px;text-align:right;">876,11</div>
<div class="t" style="top:396px;font-size:11px;line-height:13px;color:#000048;left:719px;width:500px;text-align:right;">51,50</div>
<div class="r" style="left:0px;top:426px;width:1262px;height:1px;background:#a8a8a8;"></div>
<div class="t" style="top:413px;font-size:11px;line-height:13px;color:#000048;left:-351px;width:500px;text-align:right;">360611</div>
<div class="t" style="top:413px;font-size:11px;line-height:13px;color:#000048;left:153px;">Бункеры</div>
<div class="t" style="top:413px;font-size:11px;line-height:13px;color:#000048;left:341px;width:75px;text-align:center;">м-час</div>
<div class="t" style="top:413px;font-size:11px;line-height:13px;color:#000048;left:-26px;width:500px;text-align:right;">0,63</div>
<div class="t" style="top:413px;font-size:11px;line-height:13px;color:#000048;left:34px;width:500px;text-align:right;">9,32</div>
<div class="t" style="top:413px;font-size:11px;line-height:13px;color:#000048;left:109px;width:500px;text-align:right;">1,63</div>
<div class="t" style="top:413px;font-size:11px;line-height:13px;color:#000048;left:259px;width:500px;text-align:right;">1,63</div>
<div class="t" style="top:413px;font-size:11px;line-height:13px;color:#000048;left:334px;width:500px;text-align:right;">0,00</div>
<div class="t" style="top:413px;font-size:11px;line-height:13px;color:#000048;left:494px;width:500px;text-align:right;">15,19</div>
<div class="t" style="top:413px;font-size:11px;line-height:13px;color:#000048;left:644px;width:500px;text-align:right;">15,19</div>
<div class="t" style="top:413px;font-size:11px;line-height:13px;color:#000048;left:719px;width:500px;text-align:right;">0,00</div>
<div class="r" style="left:0px;top:443px;width:1262px;height:1px;background:#a8a8a8;"></div>
<div class="t" style="top:430px;font-size:11px;line-height:13px;color:#000048;left:-351px;width:500px;text-align:right;">400001</div>
<div class="t" style="top:430px;font-size:11px;line-height:13px;color:#000048;left:153px;">Автомобили бортовые грузоподъ<span style="letter-spacing:1px">..</span>.</div>
<div class="t" style="top:430px;font-size:11px;line-height:13px;color:#000048;left:341px;width:75px;text-align:center;">м-час</div>
<div class="t" style="top:430px;font-size:11px;line-height:13px;color:#000048;left:-26px;width:500px;text-align:right;">0,23</div>
<div class="t" style="top:430px;font-size:11px;line-height:13px;color:#000048;left:34px;width:500px;text-align:right;">3,4</div>
<div class="t" style="top:430px;font-size:11px;line-height:13px;color:#000048;left:109px;width:500px;text-align:right;">83,99</div>
<div class="t" style="top:430px;font-size:11px;line-height:13px;color:#000048;left:259px;width:500px;text-align:right;">83,99</div>
<div class="t" style="top:430px;font-size:11px;line-height:13px;color:#000048;left:334px;width:500px;text-align:right;">0,00</div>
<div class="t" style="top:430px;font-size:11px;line-height:13px;color:#000048;left:494px;width:500px;text-align:right;">285,57</div>
<div class="t" style="top:430px;font-size:11px;line-height:13px;color:#000048;left:644px;width:500px;text-align:right;">285,57</div>
<div class="t" style="top:430px;font-size:11px;line-height:13px;color:#000048;left:719px;width:500px;text-align:right;">0,00</div>
<div class="r" style="left:0px;top:460px;width:1262px;height:1px;background:#a8a8a8;"></div>
<div class="t" style="top:447px;font-size:11px;line-height:13px;color:#000048;left:-351px;width:500px;text-align:right;">101-0797</div>
<div class="t" style="top:447px;font-size:11px;line-height:13px;color:#000048;left:153px;">Катанка горячекатаная в мотках <span style="letter-spacing:1px">..</span>.</div>
<div class="t" style="top:447px;font-size:11px;line-height:13px;color:#000048;left:341px;width:75px;text-align:center;">т</div>
<div class="t" style="top:447px;font-size:11px;line-height:13px;color:#000048;left:-26px;width:500px;text-align:right;">0,00024</div>
<div class="t" style="top:447px;font-size:11px;line-height:13px;color:#000048;left:34px;width:500px;text-align:right;">0,00355</div>
<div class="t" style="top:447px;font-size:11px;line-height:13px;color:#000048;left:109px;width:500px;text-align:right;">5 256,50</div>
<div class="t" style="top:447px;font-size:11px;line-height:13px;color:#000048;left:409px;width:500px;text-align:right;">5 256,50</div>
<div class="t" style="top:447px;font-size:11px;line-height:13px;color:#000048;left:494px;width:500px;text-align:right;">18,66</div>
<div class="r" style="left:0px;top:477px;width:1262px;height:1px;background:#a8a8a8;"></div>
<div class="t" style="top:464px;font-size:11px;line-height:13px;color:#000048;left:-351px;width:500px;text-align:right;">101-1305</div>
<div class="t" style="top:464px;font-size:11px;line-height:13px;color:#000048;left:109px;width:500px;text-align:right;">729,54</div>
<div class="t" style="top:464px;font-size:11px;line-height:13px;color:#000048;left:409px;width:500px;text-align:right;">729,54</div>
<div class="t" style="top:464px;font-size:11px;line-height:13px;color:#000048;left:494px;width:500px;text-align:right;">1 510,88</div>
<div class="t" style="top:464px;font-size:11px;line-height:13px;color:#000048;left:758px;width:500px;text-align:right;">1</div>
<div class="r" style="left:0px;top:494px;width:1262px;height:1px;background:#a8a8a8;"></div>
<div class="t" style="top:481px;font-size:11px;line-height:13px;color:#000048;left:-351px;width:500px;text-align:right;">103-0537</div>
<div class="t" style="top:481px;font-size:11px;line-height:13px;color:#000048;left:153px;">Трубы бесшовные обсадные из ст<span style="letter-spacing:1px">..</span>.</div>
<div class="t" style="top:481px;font-size:11px;line-height:13px;color:#000048;left:341px;width:75px;text-align:center;">м</div>
<div class="t" style="top:481px;font-size:11px;line-height:13px;color:#000048;left:-26px;width:500px;text-align:right;">0,025</div>
<div class="t" style="top:481px;font-size:11px;line-height:13px;color:#000048;left:34px;width:500px;text-align:right;">0,3697</div>
<div class="t" style="top:481px;font-size:11px;line-height:13px;color:#000048;left:109px;width:500px;text-align:right;">453,25</div>
<div class="t" style="top:481px;font-size:11px;line-height:13px;color:#000048;left:409px;width:500px;text-align:right;">453,25</div>
<div class="t" style="top:481px;font-size:11px;line-height:13px;color:#000048;left:494px;width:500px;text-align:right;">167,57</div>
<div class="r" style="left:0px;top:511px;width:1262px;height:1px;background:#a8a8a8;"></div>
<div class="t" style="top:498px;font-size:11px;line-height:13px;color:#b4001c;left:44px;">Н</div>
<div class="t" style="top:498px;font-size:11px;line-height:13px;color:#b4001c;left:-351px;width:500px;text-align:right;">103-9080</div>
<div class="t" style="top:498px;font-size:11px;line-height:13px;color:#b4001c;left:153px;">Трубы стальные обсадные</div>
<div class="t" style="top:498px;font-size:11px;line-height:13px;color:#b4001c;left:341px;width:75px;text-align:center;">м</div>
<div class="t" style="top:498px;font-size:11px;line-height:13px;color:#b4001c;left:-26px;width:500px;text-align:right;">0</div>
<div class="t" style="top:498px;font-size:11px;line-height:13px;color:#b4001c;left:34px;width:500px;text-align:right;">0</div>
<div class="t" style="top:498px;font-size:11px;line-height:13px;color:#b4001c;left:109px;width:500px;text-align:right;">934,00</div>
<div class="t" style="top:498px;font-size:11px;line-height:13px;color:#b4001c;left:409px;width:500px;text-align:right;">934,00</div>
<div class="t" style="top:498px;font-size:11px;line-height:13px;color:#b4001c;left:494px;width:500px;text-align:right;">0,00</div>
<div class="r" style="left:0px;top:528px;width:1262px;height:1px;background:#a8a8a8;"></div>
<div class="t" style="top:515px;font-size:11px;line-height:13px;color:#000048;left:-351px;width:500px;text-align:right;">105-0118</div>
<div class="t" style="top:515px;font-size:11px;line-height:13px;color:#000048;left:153px;">Шпалы пропитанные для железн<span style="letter-spacing:1px">..</span>.</div>
<div class="t" style="top:515px;font-size:11px;line-height:13px;color:#000048;left:341px;width:75px;text-align:center;">шт</div>
<div class="t" style="top:515px;font-size:11px;line-height:13px;color:#000048;left:-26px;width:500px;text-align:right;">0,21</div>
<div class="t" style="top:515px;font-size:11px;line-height:13px;color:#000048;left:34px;width:500px;text-align:right;">3,106</div>
<div class="t" style="top:515px;font-size:11px;line-height:13px;color:#000048;left:109px;width:500px;text-align:right;">236,00</div>
<div class="t" style="top:515px;font-size:11px;line-height:13px;color:#000048;left:409px;width:500px;text-align:right;">236,00</div>
<div class="t" style="top:515px;font-size:11px;line-height:13px;color:#000048;left:494px;width:500px;text-align:right;">733,02</div>
<div class="r" style="left:0px;top:545px;width:1262px;height:1px;background:#a8a8a8;"></div>
<div class="t" style="top:532px;font-size:11px;line-height:13px;color:#b4001c;left:44px;">Н</div>
<div class="t" style="top:532px;font-size:11px;line-height:13px;color:#b4001c;left:-351px;width:500px;text-align:right;">109-9101</div>
<div class="t" style="top:532px;font-size:11px;line-height:13px;color:#b4001c;left:153px;">Расход бурового инструмента</div>
<div class="t" style="top:532px;font-size:11px;line-height:13px;color:#b4001c;left:341px;width:75px;text-align:center;">компл</div>
<div class="t" style="top:532px;font-size:11px;line-height:13px;color:#b4001c;left:-26px;width:500px;text-align:right;">0</div>
<div class="t" style="top:532px;font-size:11px;line-height:13px;color:#b4001c;left:34px;width:500px;text-align:right;">0</div>
<div class="t" style="top:532px;font-size:11px;line-height:13px;color:#b4001c;left:109px;width:500px;text-align:right;">0,00</div>
<div class="t" style="top:532px;font-size:11px;line-height:13px;color:#b4001c;left:409px;width:500px;text-align:right;">0,00</div>
<div class="t" style="top:532px;font-size:11px;line-height:13px;color:#b4001c;left:494px;width:500px;text-align:right;">0,00</div>
<div class="r" style="left:0px;top:562px;width:1262px;height:1px;background:#a8a8a8;"></div>
<div class="t" style="top:549px;font-size:11px;line-height:13px;color:#000048;left:-351px;width:500px;text-align:right;">201-9370</div>
<div class="t" style="top:549px;font-size:11px;line-height:13px;color:#000048;left:153px;">Кондуктор инвентарный металли<span style="letter-spacing:1px">..</span>.</div>
<div class="t" style="top:549px;font-size:11px;line-height:13px;color:#000048;left:341px;width:75px;text-align:center;">шт</div>
<div class="t" style="top:549px;font-size:11px;line-height:13px;color:#000048;left:-26px;width:500px;text-align:right;">0,0015</div>
<div class="t" style="top:549px;font-size:11px;line-height:13px;color:#000048;left:34px;width:500px;text-align:right;">0,02218</div>
<div class="t" style="top:549px;font-size:11px;line-height:13px;color:#000048;left:109px;width:500px;text-align:right;">354,70</div>
<div class="t" style="top:549px;font-size:11px;line-height:13px;color:#000048;left:409px;width:500px;text-align:right;">354,70</div>
<div class="t" style="top:549px;font-size:11px;line-height:13px;color:#000048;left:494px;width:500px;text-align:right;">7,87</div>
<div class="r" style="left:0px;top:579px;width:1262px;height:1px;background:#a8a8a8;"></div>
<div class="t" style="top:566px;font-size:11px;line-height:13px;color:#000048;left:-351px;width:500px;text-align:right;">203-0511</div>
<div class="t" style="top:566px;font-size:11px;line-height:13px;color:#000048;left:153px;">Щиты из досок толщиной 25 мм</div>
<div class="t" style="top:566px;font-size:11px;line-height:13px;color:#000048;left:341px;width:75px;text-align:center;">м2</div>
<div class="t" style="top:566px;font-size:11px;line-height:13px;color:#000048;left:-26px;width:500px;text-align:right;">0,28</div>
<div class="t" style="top:566px;font-size:11px;line-height:13px;color:#000048;left:34px;width:500px;text-align:right;">4,141</div>
<div class="t" style="top:566px;font-size:11px;line-height:13px;color:#000048;left:109px;width:500px;text-align:right;">40,90</div>
<div class="t" style="top:566px;font-size:11px;line-height:13px;color:#000048;left:409px;width:500px;text-align:right;">40,90</div>
<div class="t" style="top:566px;font-size:11px;line-height:13px;color:#000048;left:494px;width:500px;text-align:right;">169,37</div>
<div class="r" style="left:0px;top:596px;width:1262px;height:1px;background:#a8a8a8;"></div>
<div class="t" style="top:583px;font-size:11px;line-height:13px;color:#b4001c;left:44px;">Н</div>
<div class="t" style="top:583px;font-size:11px;line-height:13px;color:#b4001c;left:-351px;width:500px;text-align:right;">204-9120</div>
<div class="t" style="top:583px;font-size:11px;line-height:13px;color:#b4001c;left:153px;">Каркасы арматурные</div>
<div class="t" style="top:583px;font-size:11px;line-height:13px;color:#b4001c;left:341px;width:75px;text-align:center;">т</div>
<div class="t" style="top:583px;font-size:11px;line-height:13px;color:#b4001c;left:-26px;width:500px;text-align:right;">0</div>
<div class="t" style="top:583px;font-size:11px;line-height:13px;color:#b4001c;left:34px;width:500px;text-align:right;">0</div>
<div class="t" style="top:583px;font-size:11px;line-height:13px;color:#b4001c;left:109px;width:500px;text-align:right;">0,00</div>
<div class="t" style="top:583px;font-size:11px;line-height:13px;color:#b4001c;left:409px;width:500px;text-align:right;">0,00</div>
<div class="t" style="top:583px;font-size:11px;line-height:13px;color:#b4001c;left:494px;width:500px;text-align:right;">0,00</div>
<div class="r" style="left:0px;top:613px;width:1262px;height:1px;background:#a8a8a8;"></div>
<div class="t" style="top:600px;font-size:11px;line-height:13px;color:#000048;left:-351px;width:500px;text-align:right;">401-0006</div>
<div class="t" style="top:600px;font-size:11px;line-height:13px;color:#000048;left:153px;">Бетон тяжелый, класс В 15 (М200)</div>
<div class="t" style="top:600px;font-size:11px;line-height:13px;color:#000048;left:341px;width:75px;text-align:center;">м3</div>
<div class="t" style="top:600px;font-size:11px;line-height:13px;color:#000048;left:-26px;width:500px;text-align:right;">1,14</div>
<div class="t" style="top:600px;font-size:11px;line-height:13px;color:#000048;left:34px;width:500px;text-align:right;">16,86</div>
<div class="t" style="top:600px;font-size:11px;line-height:13px;color:#000048;left:109px;width:500px;text-align:right;">609,37</div>
<div class="t" style="top:600px;font-size:11px;line-height:13px;color:#000048;left:409px;width:500px;text-align:right;">609,37</div>
<div class="t" style="top:600px;font-size:11px;line-height:13px;color:#000048;left:494px;width:500px;text-align:right;">10 273,98</div>
<div class="t" style="top:600px;font-size:11px;line-height:13px;color:#000048;left:758px;width:500px;text-align:right;">10</div>
<div class="r" style="left:0px;top:630px;width:1262px;height:1px;background:#a8a8a8;"></div>
<div class="t" style="top:617px;font-size:11px;line-height:13px;color:#000048;left:-351px;width:500px;text-align:right;">407-0005</div>
<div class="t" style="top:617px;font-size:11px;line-height:13px;color:#000048;left:153px;">Глина бентонитовая</div>
<div class="t" style="top:617px;font-size:11px;line-height:13px;color:#000048;left:341px;width:75px;text-align:center;">т</div>
<div class="t" style="top:617px;font-size:11px;line-height:13px;color:#000048;left:-26px;width:500px;text-align:right;">0,063</div>
<div class="t" style="top:617px;font-size:11px;line-height:13px;color:#000048;left:34px;width:500px;text-align:right;">0,9317</div>
<div class="t" style="top:617px;font-size:11px;line-height:13px;color:#000048;left:109px;width:500px;text-align:right;">902,79</div>
<div class="t" style="top:617px;font-size:11px;line-height:13px;color:#000048;left:409px;width:500px;text-align:right;">902,79</div>
<div class="t" style="top:617px;font-size:11px;line-height:13px;color:#000048;left:494px;width:500px;text-align:right;">841,13</div>
<div class="r" style="left:41px;top:308px;width:1px;height:322px;background:#a8a8a8;"></div>
<div class="r" style="left:151px;top:308px;width:1px;height:322px;background:#a8a8a8;"></div>
<div class="r" style="left:341px;top:308px;width:1px;height:322px;background:#a8a8a8;"></div>
<div class="r" style="left:416px;top:308px;width:1px;height:322px;background:#a8a8a8;"></div>
<div class="r" style="left:476px;top:308px;width:1px;height:322px;background:#a8a8a8;"></div>
<div class="r" style="left:536px;top:308px;width:1px;height:322px;background:#a8a8a8;"></div>
<div class="r" style="left:611px;top:308px;width:1px;height:322px;background:#a8a8a8;"></div>
<div class="r" style="left:686px;top:308px;width:1px;height:322px;background:#a8a8a8;"></div>
<div class="r" style="left:761px;top:308px;width:1px;height:322px;background:#a8a8a8;"></div>
<div class="r" style="left:836px;top:308px;width:1px;height:322px;background:#a8a8a8;"></div>
<div class="r" style="left:911px;top:308px;width:1px;height:322px;background:#a8a8a8;"></div>
<div class="r" style="left:996px;top:308px;width:1px;height:322px;background:#a8a8a8;"></div>
<div class="r" style="left:1071px;top:308px;width:1px;height:322px;background:#a8a8a8;"></div>
<div class="r" style="left:1146px;top:308px;width:1px;height:322px;background:#a8a8a8;"></div>
<div class="r" style="left:1221px;top:308px;width:1px;height:322px;background:#a8a8a8;"></div>
<div class="r" style="left:1px;top:631px;width:1261px;height:87px;background:#ffffff;"></div>
<div class="r" style="left:0px;top:664px;width:1262px;height:1px;background:#a8a8a8;"></div>
<div class="r" style="left:41px;top:631px;width:1px;height:87px;background:#a8a8a8;"></div>
<div class="r" style="left:151px;top:631px;width:1px;height:87px;background:#a8a8a8;"></div>
<div class="r" style="left:341px;top:631px;width:1px;height:87px;background:#a8a8a8;"></div>
<div class="r" style="left:416px;top:631px;width:1px;height:87px;background:#a8a8a8;"></div>
<div class="r" style="left:536px;top:631px;width:1px;height:87px;background:#a8a8a8;"></div>
<div class="r" style="left:611px;top:631px;width:1px;height:87px;background:#a8a8a8;"></div>
<div class="r" style="left:686px;top:631px;width:1px;height:87px;background:#a8a8a8;"></div>
<div class="r" style="left:761px;top:631px;width:1px;height:87px;background:#a8a8a8;"></div>
<div class="r" style="left:836px;top:631px;width:1px;height:87px;background:#a8a8a8;"></div>
<div class="r" style="left:911px;top:631px;width:1px;height:87px;background:#a8a8a8;"></div>
<div class="r" style="left:996px;top:631px;width:1px;height:87px;background:#a8a8a8;"></div>
<div class="r" style="left:1071px;top:631px;width:1px;height:87px;background:#a8a8a8;"></div>
<div class="r" style="left:1146px;top:631px;width:1px;height:87px;background:#a8a8a8;"></div>
<div class="r" style="left:1221px;top:631px;width:1px;height:87px;background:#a8a8a8;"></div>
<div class="t" style="top:634px;font-size:11px;line-height:13px;color:#000;left:-461px;width:500px;text-align:right;">10</div>
<div class="t" style="top:634px;font-size:11px;line-height:13px;color:#000;font-weight:bold;letter-spacing:0.5px;left:44px;">СЦМ-109-0020</div>
<div class="t" style="top:634px;font-size:11px;line-height:13px;color:#000;left:154px;">Долота трехшарошечные типа</div>
<div class="t" style="top:647px;font-size:11px;line-height:13px;color:#000;left:154px;">Ш1460К-ЦВ</div>
<div class="t" style="top:634px;font-size:11px;line-height:13px;color:#000;left:341px;width:75px;text-align:center;">шт</div>
<div class="t" style="top:634px;font-size:11px;line-height:13px;color:#000;left:34px;width:500px;text-align:right;">37</div>
<div class="t" style="top:634px;font-size:11px;line-height:13px;color:#000;left:109px;width:500px;text-align:right;">1 928,20</div>
<div class="t" style="top:634px;font-size:11px;line-height:13px;color:#000;left:409px;width:500px;text-align:right;">1 928,20</div>
<div class="t" style="top:634px;font-size:11px;line-height:13px;color:#000;left:494px;width:500px;text-align:right;">71 343,40</div>
<div class="t" style="top:634px;font-size:11px;line-height:13px;color:#000;left:758px;width:500px;text-align:right;">71</div>
<div class="t" style="top:668px;font-size:11px;line-height:13px;color:#000;left:-461px;width:500px;text-align:right;">11</div>
<div class="t" style="top:668px;font-size:11px;line-height:13px;color:#000;font-weight:bold;letter-spacing:0.5px;left:44px;">ТЕР01-02-058-01</div>
<div class="t" style="top:668px;font-size:11px;line-height:13px;color:#000;left:154px;">Копание ям вручную без креплений</div>
<div class="t" style="top:681px;font-size:11px;line-height:13px;color:#000;left:154px;">для стоек и столбов без откосов</div>
<div class="t" style="top:694px;font-size:11px;line-height:13px;color:#000;left:154px;">глубиной до 0,7 м группа грунтов 1</div>
<div class="t" style="top:668px;font-size:11px;line-height:13px;color:#000;left:341px;width:75px;text-align:center;">100 м3 грунта</div>
<div class="t" style="top:668px;font-size:11px;line-height:13px;color:#000;left:34px;width:500px;text-align:right;">0,544</div>
<div class="t" style="top:680px;font-size:9px;line-height:12px;color:#1a7e1a;letter-spacing:0.35px;left:32px;width:500px;text-align:right;">(0,36*132+0,43*16)/100</div>
<div class="t" style="top:668px;font-size:11px;line-height:13px;color:#000;left:109px;width:500px;text-align:right;">1 133,06</div>
<div class="t" style="top:668px;font-size:11px;line-height:13px;color:#000;left:184px;width:500px;text-align:right;">1 133,06</div>
<div class="t" style="top:668px;font-size:11px;line-height:13px;color:#000;left:494px;width:500px;text-align:right;">616,38</div>
<div class="t" style="top:668px;font-size:11px;line-height:13px;color:#000;left:569px;width:500px;text-align:right;">616,38</div>
<div class="r" style="left:151px;top:460px;width:434px;height:21px;background:linear-gradient(180deg,#fffff6,#f4f2dc);border:1px solid #a0a098;box-sizing:border-box;box-shadow:1px 1px 1px rgba(0,0,0,0.25)"></div>
<div class="t" style="top:464px;font-size:12px;line-height:15px;color:#1a1a1a;left:156px;-webkit-text-stroke:0;">Портландцемент общестроительного назначения бездобавочный марки 400</div>
<div class="r" style="left:1px;top:103px;width:1px;height:615px;background:rgba(255,255,255,0.85);"></div>
</div>
<div class="r" style="left:1262px;top:101px;width:16px;height:617px;background:#ededed;"></div>
<div class="r" style="left:1278px;top:23px;width:2px;height:712px;background:#f8f8f8;"></div>
<div class="r" style="left:1278px;top:101px;width:1px;height:633px;background:#a8a8a8;"></div>
<div class="r" style="left:1278px;top:736px;width:1px;height:17px;background:#c8c8c8;"></div>
<div class="r" style="left:1262px;top:101px;width:17px;height:1px;background:#a0a0a0;"></div>
<div class="r" style="left:1262px;top:102px;width:16px;height:1px;background:#fdfdfd;"></div>
<svg style="left:1262px;top:101px" width="16" height="20" viewBox="0 0 16 20"><path d="M4,12 L7.5,8 L11,12 Z" fill="#606060"/></svg>
<svg style="left:1262px;top:700px" width="16" height="18" viewBox="0 0 16 18"><path d="M4,6 L8,10.5 L12,6 Z" fill="#606060"/></svg>
<div class="r" style="left:1262px;top:231px;width:15px;height:108px;box-sizing:border-box;border:1px solid #9a9a9a;border-radius:2px;background:linear-gradient(90deg,#f4f4f4,#e8e8e8 50%,#d8d8d8)"></div>
<svg style="left:1265px;top:279px" width="10" height="10" viewBox="0 0 10 10"><path d="M1,1.5h7M1,4.5h7M1,7.5h7" stroke="#303030" stroke-width="1.2"/></svg>
<div class="r" style="left:0px;top:718px;width:1278px;height:16px;background:#a8a8a8;"></div>
<div class="r" style="left:0px;top:717px;width:692px;height:1px;background:#a8a8a8;"></div>
<div class="r" style="left:4px;top:719px;width:13px;height:13px;background:#e4e4e4;box-sizing:border-box;border:1px solid #fff;"></div>
<div class="r" style="left:17px;top:719px;width:13px;height:13px;background:#e4e4e4;box-sizing:border-box;border:1px solid #fff;"></div>
<svg style="left:4px;top:719px" width="26" height="13" viewBox="0 0 26 13"><path d="M8,3.5 L5,6.5 L8,9.5 Z" fill="#9a9a9a"/><path d="M19,3.5 L22,6.5 L19,9.5 Z" fill="#9a9a9a"/></svg>
<svg style="left:32px;top:717px" width="102" height="16" viewBox="0 0 102 16"><path d="M0,0.5 L4,14 H94 L98,0.5 Z" fill="#f3f3f3"/><path d="M0.5,0 L4.5,13.5 H93.5 L97.5,0" fill="none" stroke="#000" stroke-width="1"/></svg>
<div class="t" style="top:719px;font-size:11px;line-height:13px;color:#000;letter-spacing:0.15px;left:38px;-webkit-text-stroke:0.25px #000;">Монтаж основ<span style="letter-spacing:1px">..</span>.</div>
<svg style="left:127px;top:717px" width="101" height="16" viewBox="0 0 101 16"><path d="M0,0.5 L4,14 H93 L97,0.5 Z" fill="#f3f3f3"/><path d="M0.5,0 L4.5,13.5 H92.5 L96.5,0" fill="none" stroke="#000" stroke-width="1"/></svg>
<div class="t" style="top:719px;font-size:11px;line-height:13px;color:#000;letter-spacing:0.15px;left:133px;-webkit-text-stroke:0.25px #000;">Монтаж обору<span style="letter-spacing:1px">..</span>.</div>
<svg style="left:222px;top:717px" width="103" height="16" viewBox="0 0 103 16"><path d="M0,0.5 L4,14 H95 L99,0.5 Z" fill="#ffffff"/><path d="M0.5,0 L4.5,13.5 H94.5 L98.5,0" fill="none" stroke="#000" stroke-width="1"/></svg>
<div class="t" style="top:719px;font-size:11px;line-height:13px;color:#000;letter-spacing:0.15px;left:228px;-webkit-text-stroke:0.25px #000;">Строительные<span style="letter-spacing:1px">..</span>.</div>
<div class="r" style="left:692px;top:718px;width:5px;height:15px;background:#ffffff;border-right:1px solid #606060;box-sizing:border-box;"></div>
<div class="r" style="left:697px;top:718px;width:565px;height:15px;background:linear-gradient(180deg,#f4f4f4,#e4e4e4);"></div>
<div class="r" style="left:1262px;top:718px;width:16px;height:15px;background:#ededed;"></div>
<svg style="left:697px;top:718px" width="20" height="15" viewBox="0 0 20 15"><path d="M11,4 L7,7.5 L11,11 Z" fill="#606060"/></svg>
<div class="r" style="left:715px;top:719px;width:31px;height:13px;box-sizing:border-box;border:1px solid #9a9a9a;border-radius:2px;background:linear-gradient(180deg,#f8f8f8,#e2e2e2 55%,#d4d4d4)"></div>
<svg style="left:726px;top:721px" width="10" height="9" viewBox="0 0 10 9"><path d="M1.5,1v7M4.5,1v7M7.5,1v7" stroke="#303030" stroke-width="1.2"/></svg>
<svg style="left:1242px;top:718px" width="20" height="15" viewBox="0 0 20 15"><path d="M9,4 L13,7.5 L9,11 Z" fill="#606060"/></svg>
<div class="r" style="left:0px;top:733px;width:1280px;height:1px;background:#a0a0a0;"></div>
<div class="r" style="left:0px;top:734px;width:1280px;height:1px;background:#ffffff;"></div>
<div class="r" style="left:0px;top:735px;width:1280px;height:1px;background:#a0a0a0;"></div>
<div class="r" style="left:0px;top:736px;width:1280px;height:18px;background:#efeeed;"></div>
<div style="position:absolute;left:0;top:736px;width:117px;height:18px;overflow:hidden">
<div class="t" style="top:3px;font-size:12px;line-height:15px;color:#000;left:3px;">Краснодарский край</div>
</div>
<div class="r" style="left:124px;top:737px;width:1px;height:15px;background:#c8c8c8;"></div>
<div class="r" style="left:133px;top:737px;width:1px;height:15px;background:#c8c8c8;"></div>
<div style="position:absolute;left:0;top:736px;width:281px;height:18px;overflow:hidden">
<div class="t" style="top:3px;font-size:12px;line-height:15px;color:#000;left:139px;">Базисно-индексный расчет</div>
</div>
<div class="t" style="top:739px;font-size:12px;line-height:15px;color:#000;letter-spacing:-0.2px;left:287px;">Итого: 203 358,14р.</div>
<div class="r" style="left:0px;top:753px;width:1280px;height:1px;background:#f4f4f4;"></div>
<div class="r" style="left:0px;top:754px;width:1280px;height:46px;background:linear-gradient(180deg,#1c3658 0px,#1c385c 20px,#17304f 46px);"></div>
<div class="r" style="left:0px;top:754px;width:1280px;height:1px;background:#18304e;"></div>
<svg style="left:8px;top:756px" width="42" height="42" viewBox="0 0 42 42"><defs><radialGradient id="orb" cx="0.5" cy="0.3" r="0.75"><stop offset="0" stop-color="#a8c0d4"/><stop offset="0.45" stop-color="#3a78a8"/><stop offset="0.75" stop-color="#1a5a90"/><stop offset="1" stop-color="#40c0f0"/></radialGradient>
<radialGradient id="orb2" cx="0.5" cy="1" r="0.6"><stop offset="0" stop-color="#60e0ff" stop-opacity="0.9"/><stop offset="1" stop-color="#60e0ff" stop-opacity="0"/></radialGradient></defs>
<circle cx="21" cy="21" r="19" fill="url(#orb)" stroke="#6a8aa8" stroke-width="1.2"/>
<circle cx="21" cy="21" r="19" fill="url(#orb2)"/>
<path d="M9,13 Q13,10 20,13 L18.5,21 Q13,18.5 8,21 Z" fill="#f0642a"/>
<path d="M21,13 Q27,16 33,13 L31.5,21 Q26,23.5 19.5,21 Z" fill="#8ac83a"/>
<path d="M8,22 Q13,19.5 18.5,22 L17,30 Q12,27.5 6.5,30 Z" fill="#30a8e8"/>
<path d="M19.5,22 Q26,24.5 31.5,22 L30,30 Q24,32.5 18,30 Z" fill="#f8c828"/>
<ellipse cx="21" cy="11" rx="13" ry="8" fill="#fff" opacity="0.22"/></svg>
<svg style="left:69px;top:768px" width="18" height="18" viewBox="0 0 18 18"><circle cx="9" cy="9" r="8" fill="#e87a1a"/><circle cx="10" cy="8" r="5" fill="#3a6ac0"/><path d="M2,8 Q4,16 11,16 Q16,15 17,9 Q14,14 9,13 Q4,12 4,5 Z" fill="#f0a020"/></svg>
<svg style="left:93px;top:769px" width="17" height="15" viewBox="0 0 17 15"><rect x="0.5" y="0.5" width="16" height="13" fill="#2a6ab0" stroke="#a0c0e0"/><path d="M2,11 Q8,4 15,3" stroke="#80d0ff" stroke-width="1.5" fill="none"/></svg>
<svg style="left:116px;top:768px" width="18" height="18" viewBox="0 0 18 18"><text x="2" y="15" font-size="17" font-weight="bold" font-family="Liberation Sans" fill="#40a8f0">e</text><path d="M2,16 Q-1,12 5,6 Q12,0 16,2 Q18,4 15,8" fill="none" stroke="#f0b020" stroke-width="1.6"/></svg>
<div class="t" style="top:755px;font-size:14px;line-height:16px;color:#fff;font-weight:bold;left:143px;-webkit-text-stroke:0;">»</div>
<div class="r" style="left:162px;top:757px;width:112px;height:40px;box-sizing:border-box;border:1px solid #6f88aa;border-right-color:#46607e;border-bottom-color:#5a7494;border-radius:1px;background:linear-gradient(150deg,rgba(150,175,210,0.55) 0%,rgba(90,120,160,0.35) 22%,rgba(40,70,110,0) 45%),linear-gradient(180deg,#22426a 0%,#1c3b62 60%,#1a375c 100%);box-shadow:inset 0 1px 0 rgba(255,255,255,0.25)"></div>
<div class="t" style="top:770px;font-size:12px;line-height:15px;color:#fff;font-weight:bold;letter-spacing:-0.35px;left:195px;-webkit-text-stroke:0;">05-01-029<span style="letter-spacing:1px">..</span>.</div>
<div class="r" style="left:280px;top:757px;width:112px;height:40px;box-sizing:border-box;border:1px solid #8a9ad0;border-right-color:#46607e;border-bottom-color:#5a7494;border-radius:1px;background:radial-gradient(ellipse 40px 14px at 50% 100%,#e8e0ff 0%,#9a80f0 35%,rgba(80,60,200,0) 100%),linear-gradient(160deg,#4a6aa0 0%,#2a3a88 35%,#1c2470 70%,#2a2a90 100%);box-shadow:inset 0 1px 0 rgba(255,255,255,0.25)"></div>
<div class="t" style="top:770px;font-size:12px;line-height:15px;color:#fff;font-weight:bold;letter-spacing:-0.35px;left:313px;-webkit-text-stroke:0;">ГРАНД С<span style="letter-spacing:1px">..</span>.</div>
<div class="r" style="left:398px;top:757px;width:112px;height:40px;box-sizing:border-box;border:1px solid #6f88aa;border-right-color:#46607e;border-bottom-color:#5a7494;border-radius:1px;background:linear-gradient(150deg,rgba(150,175,210,0.55) 0%,rgba(90,120,160,0.35) 22%,rgba(40,70,110,0) 45%),linear-gradient(180deg,#22426a 0%,#1c3b62 60%,#1a375c 100%);box-shadow:inset 0 1px 0 rgba(255,255,255,0.25)"></div>
<div class="t" style="top:770px;font-size:12px;line-height:15px;color:#fff;font-weight:bold;letter-spacing:-0.35px;left:431px;-webkit-text-stroke:0;">ПС Канев<span style="letter-spacing:1px">..</span>.</div>
<div class="r" style="left:516px;top:757px;width:112px;height:40px;box-sizing:border-box;border:1px solid #6f88aa;border-right-color:#46607e;border-bottom-color:#5a7494;border-radius:1px;background:linear-gradient(150deg,rgba(150,175,210,0.55) 0%,rgba(90,120,160,0.35) 22%,rgba(40,70,110,0) 45%),linear-gradient(180deg,#22426a 0%,#1c3b62 60%,#1a375c 100%);box-shadow:inset 0 1px 0 rgba(255,255,255,0.25)"></div>
<div class="t" style="top:770px;font-size:12px;line-height:15px;color:#fff;font-weight:bold;letter-spacing:-0.35px;left:549px;-webkit-text-stroke:0;">ПС Канев<span style="letter-spacing:1px">..</span>.</div>
<div class="r" style="left:635px;top:757px;width:112px;height:40px;box-sizing:border-box;border:1px solid #6f88aa;border-right-color:#46607e;border-bottom-color:#5a7494;border-radius:1px;background:linear-gradient(150deg,rgba(150,175,210,0.55) 0%,rgba(90,120,160,0.35) 22%,rgba(40,70,110,0) 45%),linear-gradient(180deg,#22426a 0%,#1c3b62 60%,#1a375c 100%);box-shadow:inset 0 1px 0 rgba(255,255,255,0.25)"></div>
<div class="t" style="top:770px;font-size:12px;line-height:15px;color:#fff;font-weight:bold;letter-spacing:-0.35px;left:668px;-webkit-text-stroke:0;">Загрузки</div>
<div class="r" style="left:754px;top:757px;width:112px;height:40px;box-sizing:border-box;border:1px solid #6f88aa;border-right-color:#46607e;border-bottom-color:#5a7494;border-radius:1px;background:linear-gradient(150deg,rgba(150,175,210,0.55) 0%,rgba(90,120,160,0.35) 22%,rgba(40,70,110,0) 45%),linear-gradient(180deg,#22426a 0%,#1c3b62 60%,#1a375c 100%);box-shadow:inset 0 1px 0 rgba(255,255,255,0.25)"></div>
<div class="t" style="top:770px;font-size:12px;line-height:15px;color:#fff;font-weight:bold;letter-spacing:-0.35px;left:787px;-webkit-text-stroke:0;">Total Co<span style="letter-spacing:1px">..</span>.</div>
<div class="r" style="left:873px;top:757px;width:112px;height:40px;box-sizing:border-box;border:1px solid #6f88aa;border-right-color:#46607e;border-bottom-color:#5a7494;border-radius:1px;background:linear-gradient(150deg,rgba(150,175,210,0.55) 0%,rgba(90,120,160,0.35) 22%,rgba(40,70,110,0) 45%),linear-gradient(180deg,#22426a 0%,#1c3b62 60%,#1a375c 100%);box-shadow:inset 0 1px 0 rgba(255,255,255,0.25)"></div>
<div class="t" style="top:770px;font-size:12px;line-height:15px;color:#fff;font-weight:bold;letter-spacing:-0.35px;left:906px;-webkit-text-stroke:0;">TER-2001 <span style="letter-spacing:1px">..</span>.</div>
<div class="r" style="left:992px;top:757px;width:112px;height:40px;box-sizing:border-box;border:1px solid #6f88aa;border-right-color:#46607e;border-bottom-color:#5a7494;border-radius:1px;background:linear-gradient(150deg,rgba(150,175,210,0.55) 0%,rgba(90,120,160,0.35) 22%,rgba(40,70,110,0) 45%),linear-gradient(180deg,#22426a 0%,#1c3b62 60%,#1a375c 100%);box-shadow:inset 0 1px 0 rgba(255,255,255,0.25)"></div>
<div class="t" style="top:770px;font-size:12px;line-height:15px;color:#fff;font-weight:bold;letter-spacing:-0.35px;left:1025px;-webkit-text-stroke:0;">Поясните<span style="letter-spacing:1px">..</span>.</div>
<svg style="left:174px;top:768px" width="18" height="18" viewBox="0 0 18 18"><circle cx="9" cy="9" r="8" fill="#e87a1a"/><circle cx="10" cy="8" r="5" fill="#3a6ac0"/><path d="M2,8 Q4,16 11,16 Q16,15 17,9 Q14,14 9,13 Q4,12 4,5 Z" fill="#f0a020"/></svg>
<svg style="left:291px;top:772px" width="20" height="14" viewBox="0 0 20 14"><rect x="0.0" y="0.0" width="3.6" height="3.6" fill="#e01010"/><rect x="6.0" y="0.0" width="3.6" height="3.6" fill="#e01010"/><rect x="10.799999999999999" y="0.0" width="3.6" height="3.6" fill="#e01010"/><rect x="1.2" y="4.8" width="3.6" height="3.6" fill="#1010c0"/><rect x="6.0" y="4.8" width="3.6" height="3.6" fill="#e02010"/><rect x="10.799999999999999" y="4.8" width="3.6" height="3.6" fill="#1010c0"/><rect x="1.2" y="9.6" width="3.6" height="3.6" fill="#1010c0"/><rect x="6.0" y="9.6" width="3.6" height="3.6" fill="#1010c0"/><rect x="10.799999999999999" y="9.6" width="3.6" height="3.6" fill="#1010c0"/><rect x="15.6" y="9.6" width="3.6" height="3.6" fill="#1010c0"/></svg>
<svg style="left:410px;top:768px" width="17" height="15" viewBox="0 0 17 15"><path d="M0.5,1.5 H6 L8,3.5 H15.5 V13.5 H0.5 Z" fill="#e0b840" stroke="#8a6a10"/><path d="M1,6 H16.5 L15,13.5 H0.5 Z" fill="#fce888" stroke="#a08020" stroke-width="0.7"/></svg>
<svg style="left:528px;top:768px" width="17" height="15" viewBox="0 0 17 15"><path d="M0.5,1.5 H6 L8,3.5 H15.5 V13.5 H0.5 Z" fill="#e0b840" stroke="#8a6a10"/><path d="M1,6 H16.5 L15,13.5 H0.5 Z" fill="#fce888" stroke="#a08020" stroke-width="0.7"/></svg>
<svg style="left:647px;top:768px" width="17" height="15" viewBox="0 0 17 15"><path d="M0.5,1.5 H6 L8,3.5 H15.5 V13.5 H0.5 Z" fill="#e0b840" stroke="#8a6a10"/><path d="M1,6 H16.5 L15,13.5 H0.5 Z" fill="#fce888" stroke="#a08020" stroke-width="0.7"/></svg>
<svg style="left:767px;top:768px" width="16" height="18" viewBox="0 0 16 18"><rect x="0.5" y="0.5" width="15" height="17" fill="#40a040" stroke="#206020"/><rect x="3" y="9" width="10" height="7" fill="#fff"/><text x="3.5" y="15.5" font-size="6" font-weight="bold" font-family="Liberation Sans" fill="#202020">DL</text><rect x="5" y="1" width="6" height="5" fill="#a0d0a0"/></svg>
<svg style="left:886px;top:768px" width="16" height="18" viewBox="0 0 16 18"><rect x="0.5" y="0.5" width="15" height="17" fill="#e8f0f8" stroke="#8aa0c0"/><path d="M2,4 L12,12" stroke="#3a7ad0" stroke-width="3"/><rect x="6" y="11" width="9" height="6" fill="#e02020"/></svg>
<svg style="left:1005px;top:768px" width="17" height="18" viewBox="0 0 17 18"><rect x="3.5" y="0.5" width="13" height="17" fill="#fff" stroke="#8aa0c0"/><path d="M6,4h8M6,7h8M6,10h8M6,13h8" stroke="#a0b0d0"/><rect x="0.5" y="3.5" width="10" height="10" fill="#2a5ab0"/><text x="1.5" y="12" font-size="9" font-weight="bold" font-family="Liberation Sans" fill="#fff">W</text></svg>
<div class="t" style="top:770px;font-size:12px;line-height:15px;color:#fff;font-weight:bold;letter-spacing:-0.5px;left:1117px;-webkit-text-stroke:0;">RL</div>
<div class="t" style="top:766px;font-size:18px;line-height:18px;color:#fff;font-weight:bold;left:1140px;-webkit-text-stroke:0;">‹</div>
<svg style="left:1154px;top:759px" width="18" height="15" viewBox="0 0 18 15"><rect x="5.5" y="0.5" width="11" height="8" fill="#1a2a80" stroke="#80b0f0"/><path d="M6,2.5h10" stroke="#a0c0f0"/><rect x="0.5" y="4.5" width="11" height="8" fill="#101c70" stroke="#80b0f0"/><path d="M1,6.5h10" stroke="#a0c0f0"/></svg>
<svg style="left:1172px;top:759px" width="18" height="18" viewBox="0 0 18 18"><circle cx="9" cy="9" r="8" fill="#c8d8c8" stroke="#e8f0e8"/><circle cx="9" cy="9" r="5.5" fill="#3aa03a"/><path d="M6,8 L9,11 L12,8" stroke="#d0ffd0" stroke-width="1.2" fill="none"/></svg>
<div class="t" style="top:775px;font-size:18px;line-height:20px;color:#e81818;left:1157px;transform:scaleX(0.75);transform-origin:0 0;">Я</div>
<div class="t" style="top:759px;font-size:12px;line-height:15px;color:#fff;font-weight:bold;letter-spacing:-0.7px;left:1219px;-webkit-text-stroke:0;">11:16</div>
<div class="t" style="top:781px;font-size:12px;line-height:15px;color:#fff;font-weight:bold;letter-spacing:-0.7px;left:1216px;-webkit-text-stroke:0;">среда</div>
</body></html>
